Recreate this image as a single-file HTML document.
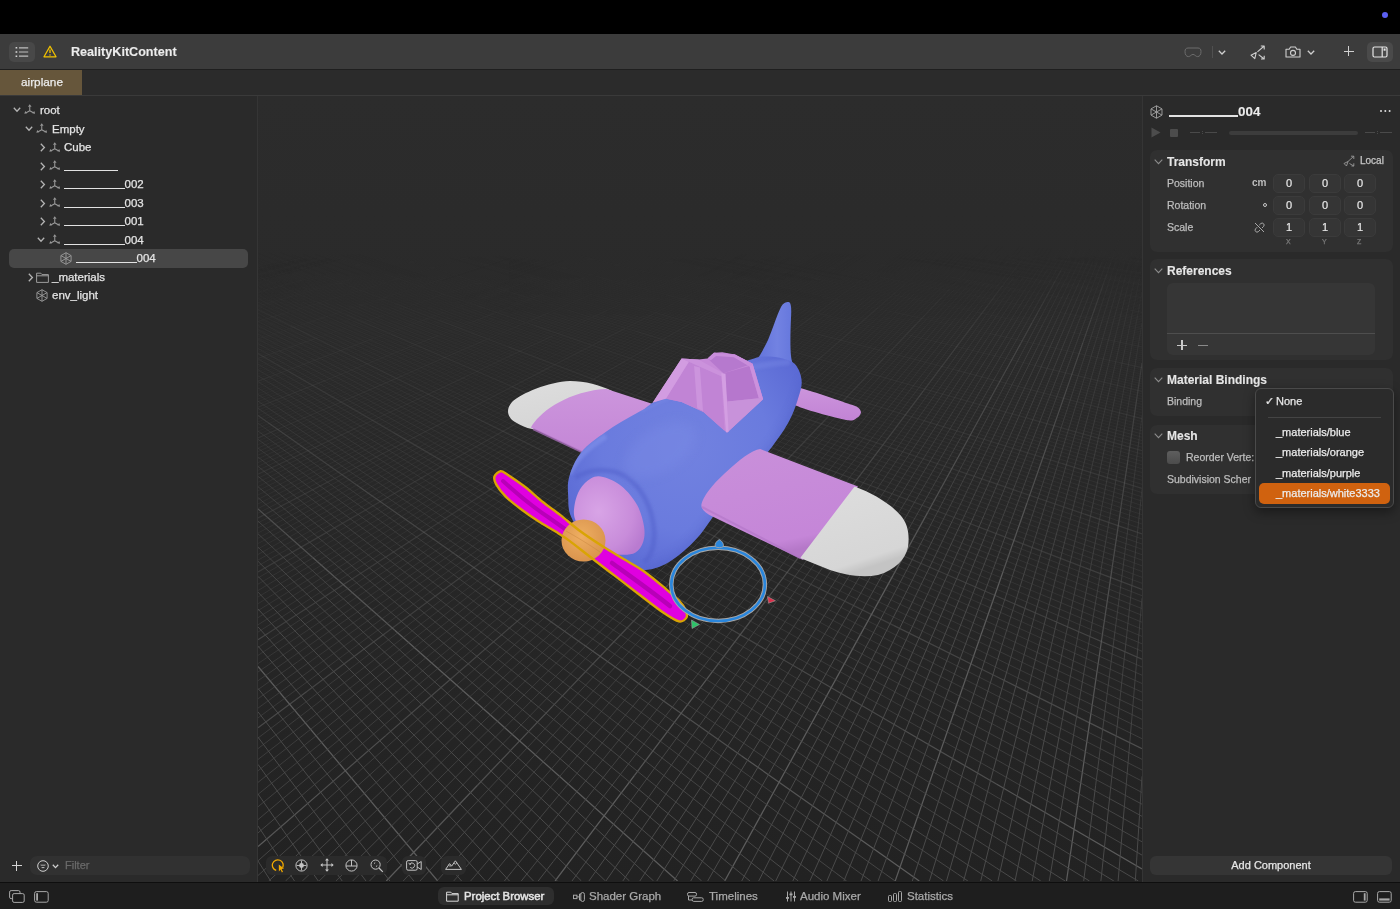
<!DOCTYPE html>
<html><head><meta charset="utf-8">
<style>
*{box-sizing:border-box;margin:0;padding:0}
html,body{width:1400px;height:909px;overflow:hidden;background:#2a2a2a;font-family:"Liberation Sans",sans-serif;color:#dcdcdc}
.a{position:absolute}
.t{position:absolute;white-space:nowrap;line-height:1;-webkit-text-stroke:0.25px currentColor;will-change:transform}
#topbar{left:0;top:0;width:1400px;height:34px;background:#000}
#toolbar{left:0;top:34px;width:1400px;height:36px;background:#3c3c3c;border-bottom:1px solid #1f1f1f}
#tabbar{left:0;top:70px;width:1400px;height:26px;background:#2b2b2b;border-bottom:1px solid #3a3a3a}
#left{left:0;top:96px;width:258px;height:786px;background:#2a2a2a;border-right:1px solid #353535}
#view{left:258px;top:96px;width:884px;height:786px;background:#222;overflow:hidden}
#right{left:1142px;top:96px;width:258px;height:786px;background:#2a2a2a;border-left:1px solid #353535}
#bottom{left:0;top:882px;width:1400px;height:27px;background:#1e1e1e;border-top:1px solid #0e0e0e}
.row{position:absolute;font-size:11.5px;color:#e4e4e4}
.card{position:absolute;left:8px;width:243px;background:#2f2f2f;border-radius:7px}
.fld{position:absolute;width:32px;height:19px;background:#353535;border:1px solid #3b3b3b;border-radius:5px;font-size:11px;color:#e8e8e8;text-align:center;line-height:17px;will-change:transform;-webkit-text-stroke:0.2px currentColor}
.lbl{font-size:11px;color:#bdbdbd}
.hdr{font-size:12px;font-weight:bold;color:#e6e6e6;-webkit-text-stroke:0.1px currentColor}
.us{display:inline-block;border-bottom:1.6px solid #e2e2e2;height:0;vertical-align:baseline;position:relative;top:1.4px}
</style></head><body>
<svg width="0" height="0" style="position:absolute">
<defs>
<symbol id="i-axis" viewBox="0 0 12 11"><g fill="none" stroke="#9a9a9a" stroke-width="1.1"><path d="M6 2.5V7M6 7L2.2 9.2M6 7L9.8 9.2"/></g><g fill="#9a9a9a"><path d="M6 0.3L7.9 3H4.1Z"/><path d="M0.3 10.2L1.3 7.4L3.3 9.8Z"/><path d="M11.7 10.2L10.7 7.4L8.7 9.8Z"/></g></symbol>
<symbol id="i-mesh" viewBox="0 0 12 13"><g fill="none" stroke="#9c9c9c" stroke-width="0.9"><path d="M6 0.7L11.1 3.6V9.4L6 12.3L0.9 9.4V3.6Z"/><path d="M6 0.7V12.3M0.9 3.6L11.1 9.4M11.1 3.6L0.9 9.4"/></g></symbol>
<symbol id="i-folder" viewBox="0 0 13 11"><g fill="none" stroke="#9c9c9c" stroke-width="1"><path d="M0.6 1.2H4.8L6 2.6H12.4V10.4H0.6Z"/><path d="M0.6 3.8H12.4"/></g></symbol>
</defs></svg>
<div id="topbar" class="a"></div>
<div class="a" style="left:1382px;top:12px;width:6px;height:6px;border-radius:3px;background:#5b5ff2"></div>

<div id="toolbar" class="a"></div>
<div class="a" style="left:9px;top:42px;width:26px;height:19.5px;border-radius:5px;background:#484848"></div>
<svg class="a" style="left:15px;top:46px" width="14" height="12"><g fill="#d8d8d8"><rect x="0.5" y="1" width="1.8" height="1.6" rx="0.4"/><rect x="0.5" y="5.2" width="1.8" height="1.6" rx="0.4"/><rect x="0.5" y="9.4" width="1.8" height="1.6" rx="0.4"/></g><g stroke="#bdbdbd" stroke-width="1.2"><path d="M4 1.8H13.2M4 6H13.2M4 10.2H13.2"/></g></svg>
<svg class="a" style="left:43px;top:45px" width="14" height="13"><path d="M7 1.2L13 11.8H1Z" fill="none" stroke="#f2c200" stroke-width="1.3" stroke-linejoin="round"/><path d="M7 4.6V8" stroke="#f2c200" stroke-width="1.3"/><circle cx="7" cy="9.9" r="0.75" fill="#f2c200"/></svg>
<div class="t" style="left:70.5px;top:46px;font-size:12.6px;font-weight:bold;color:#ececec;-webkit-text-stroke:0.1px #ececec">RealityKitContent</div>
<svg class="a" style="left:1184px;top:47px" width="18" height="11"><path d="M4 1H14C16 1 17 2.2 17 4.5C17 7.5 15.8 9.6 13.6 9.6C11.6 9.6 10.8 7.4 9 7.4C7.2 7.4 6.4 9.6 4.4 9.6C2.2 9.6 1 7.5 1 4.5C1 2.2 2 1 4 1Z" fill="none" stroke="#6c6c6c" stroke-width="1"/></svg>
<div class="a" style="left:1212px;top:45.5px;width:1px;height:12px;background:#505050"></div>
<svg class="a" style="left:1218px;top:50px" width="8" height="5"><path d="M0.8 0.8L4 4L7.2 0.8" stroke="#cfcfcf" stroke-width="1.3" fill="none"/></svg>
<svg class="a" style="left:1250px;top:44.5px" width="16" height="15"><g fill="none" stroke="#cfcfcf" stroke-width="1.1" stroke-linejoin="round"><path d="M1 10.2L6.2 7.6L4.8 13.6Z"/><path d="M7.4 6.8L14.2 1M10.8 1H14.2V4.4"/><path d="M8.6 9.6L14.2 14M11 14H14.2V10.8"/></g></svg>
<svg class="a" style="left:1285px;top:45.5px" width="16" height="12"><g fill="none" stroke="#cfcfcf" stroke-width="1.1"><path d="M1 3.2H4.2L5.6 1H10.4L11.8 3.2H15V11H1Z" stroke-linejoin="round"/><circle cx="8" cy="6.9" r="2.5"/></g></svg>
<svg class="a" style="left:1307px;top:50px" width="8" height="5"><path d="M0.8 0.8L4 4L7.2 0.8" stroke="#cfcfcf" stroke-width="1.3" fill="none"/></svg>
<div class="a" style="left:1343.5px;top:50.6px;width:10px;height:1.3px;background:#d0d0d0"></div>
<div class="a" style="left:1347.9px;top:46.2px;width:1.3px;height:10px;background:#d0d0d0"></div>
<div class="a" style="left:1367px;top:42px;width:25.5px;height:19.5px;border-radius:5px;background:#4a4a4a"></div>
<svg class="a" style="left:1372px;top:45.5px" width="16" height="12"><rect x="1" y="1" width="14" height="10" rx="1.5" fill="none" stroke="#e6e6e6" stroke-width="1.2"/><path d="M10.2 1V11" stroke="#e6e6e6" stroke-width="1.2"/><rect x="11.6" y="2.5" width="2" height="2.2" fill="#e6e6e6"/></svg>
<div id="tabbar" class="a"></div>
<div class="a" style="left:0;top:70px;width:82px;height:25px;background:#66563b"></div>
<div class="t" style="left:20.6px;top:77px;font-size:11.8px;color:#ececec">airplane</div>

<div id="left" class="a"></div>
<div class="a" style="left:9px;top:249px;width:239px;height:18.5px;border-radius:5px;background:#474747"></div>
<svg class="a" style="left:13px;top:106.5px" width="8" height="6"><path d="M0.8 0.8L4 4.2L7.2 0.8" stroke="#b4b4b4" stroke-width="1.3" fill="none"/></svg>
<svg class="a" style="left:23.5px;top:104px" width="11.5" height="10.5" viewBox="0 0 12 11"><use href="#i-axis"/></svg>
<div class="t row" style="left:40px;top:104.5px">root</div>
<svg class="a" style="left:25px;top:125.5px" width="8" height="6"><path d="M0.8 0.8L4 4.2L7.2 0.8" stroke="#b4b4b4" stroke-width="1.3" fill="none"/></svg>
<svg class="a" style="left:35.5px;top:123px" width="11.5" height="10.5" viewBox="0 0 12 11"><use href="#i-axis"/></svg>
<div class="t row" style="left:52px;top:123.5px">Empty</div>
<svg class="a" style="left:40px;top:143.0px" width="6" height="9"><path d="M0.8 0.8L4.4 4.5L0.8 8.2" stroke="#b4b4b4" stroke-width="1.3" fill="none"/></svg>
<svg class="a" style="left:48.5px;top:141.5px" width="11.5" height="10.5" viewBox="0 0 12 11"><use href="#i-axis"/></svg>
<div class="t row" style="left:64px;top:142.0px">Cube</div>
<svg class="a" style="left:40px;top:161.5px" width="6" height="9"><path d="M0.8 0.8L4.4 4.5L0.8 8.2" stroke="#b4b4b4" stroke-width="1.3" fill="none"/></svg>
<svg class="a" style="left:48.5px;top:160px" width="11.5" height="10.5" viewBox="0 0 12 11"><use href="#i-axis"/></svg>
<div class="t row" style="left:64px;top:160.5px"><span class="us" style="width:54px"></span></div>
<svg class="a" style="left:40px;top:180.0px" width="6" height="9"><path d="M0.8 0.8L4.4 4.5L0.8 8.2" stroke="#b4b4b4" stroke-width="1.3" fill="none"/></svg>
<svg class="a" style="left:48.5px;top:178.5px" width="11.5" height="10.5" viewBox="0 0 12 11"><use href="#i-axis"/></svg>
<div class="t row" style="left:64px;top:179.0px"><span class="us" style="width:60.5px"></span>002</div>
<svg class="a" style="left:40px;top:198.5px" width="6" height="9"><path d="M0.8 0.8L4.4 4.5L0.8 8.2" stroke="#b4b4b4" stroke-width="1.3" fill="none"/></svg>
<svg class="a" style="left:48.5px;top:197px" width="11.5" height="10.5" viewBox="0 0 12 11"><use href="#i-axis"/></svg>
<div class="t row" style="left:64px;top:197.5px"><span class="us" style="width:60.5px"></span>003</div>
<svg class="a" style="left:40px;top:217.0px" width="6" height="9"><path d="M0.8 0.8L4.4 4.5L0.8 8.2" stroke="#b4b4b4" stroke-width="1.3" fill="none"/></svg>
<svg class="a" style="left:48.5px;top:215.5px" width="11.5" height="10.5" viewBox="0 0 12 11"><use href="#i-axis"/></svg>
<div class="t row" style="left:64px;top:216.0px"><span class="us" style="width:60.5px"></span>001</div>
<svg class="a" style="left:37px;top:236.5px" width="8" height="6"><path d="M0.8 0.8L4 4.2L7.2 0.8" stroke="#b4b4b4" stroke-width="1.3" fill="none"/></svg>
<svg class="a" style="left:48.5px;top:234px" width="11.5" height="10.5" viewBox="0 0 12 11"><use href="#i-axis"/></svg>
<div class="t row" style="left:64px;top:234.5px"><span class="us" style="width:60.5px"></span>004</div>
<svg class="a" style="left:60px;top:252.0px" width="12" height="13"><use href="#i-mesh"/></svg>
<div class="t row" style="left:76px;top:253.0px"><span class="us" style="width:60.5px"></span>004</div>
<svg class="a" style="left:28px;top:272.5px" width="6" height="9"><path d="M0.8 0.8L4.4 4.5L0.8 8.2" stroke="#b4b4b4" stroke-width="1.3" fill="none"/></svg>
<svg class="a" style="left:36px;top:271.5px" width="13" height="11"><use href="#i-folder"/></svg>
<div class="t row" style="left:52px;top:271.5px">_materials</div>
<svg class="a" style="left:36px;top:289.0px" width="12" height="13"><use href="#i-mesh"/></svg>
<div class="t row" style="left:52px;top:290.0px">env_light</div>
<div id="view" class="a">
<svg width="884" height="785" style="position:absolute;left:0;top:0">
<defs>
<linearGradient id="bgg" x1="0" y1="0" x2="0" y2="1"><stop offset="0" stop-color="#2c2c2c"/><stop offset="0.3" stop-color="#2a2a2a"/><stop offset="1" stop-color="#222222"/></linearGradient>
<linearGradient id="fade" x1="0" y1="0" x2="0" y2="785" gradientUnits="userSpaceOnUse"><stop offset="0.177" stop-color="#fff" stop-opacity="0"/><stop offset="0.285" stop-color="#fff" stop-opacity="0.26"/><stop offset="0.451" stop-color="#fff" stop-opacity="0.48"/><stop offset="0.642" stop-color="#fff" stop-opacity="0.7"/><stop offset="0.833" stop-color="#fff" stop-opacity="0.9"/><stop offset="1.0" stop-color="#fff" stop-opacity="1"/></linearGradient>
<mask id="fm"><rect width="884" height="785" fill="url(#fade)"/></mask>
<linearGradient id="fade2" x1="0" y1="0" x2="0" y2="785" gradientUnits="userSpaceOnUse"><stop offset="0.183" stop-color="#fff" stop-opacity="0"/><stop offset="0.324" stop-color="#fff" stop-opacity="0.16"/><stop offset="0.451" stop-color="#fff" stop-opacity="0.34"/><stop offset="0.642" stop-color="#fff" stop-opacity="0.66"/><stop offset="0.833" stop-color="#fff" stop-opacity="0.9"/><stop offset="1.0" stop-color="#fff" stop-opacity="1"/></linearGradient>
<mask id="fm2"><rect width="884" height="785" fill="url(#fade2)"/></mask>
</defs>
<rect width="884" height="785" fill="url(#bgg)"/>
<g fill="none"><path stroke="#5c5c5c" stroke-width="1.25" stroke-opacity="0.02" d="M856.9 154.9L860.9 143.5M814.7 153.1L820.5 142.5M766.3 160.8L773.5 151.2M716.6 166.8L733.2 149.4M666.1 171.7L684.4 155.8M615.3 175.5L644.6 153.7M565.6 177.7L595.9 158.1M514.8 180.3L556.8 156.1M475.2 176.6L507.6 159.9M426.2 178.2L469.9 157.6M376.8 179.7L421.1 160.6M326.9 181.3L372.0 163.4M276.3 183.0L333.8 161.8M229.1 183.4L286.4 163.6M188.6 181.7L247.6 162.6M141.2 182.3L211.8 160.7M93.9 182.9L164.4 162.5M46.9 183.4L128.9 160.9M0.0 183.9L81.9 162.5M0.0 172.7L46.8 161.1M56.7 176.7L11.3 159.4M126.3 177.9L68.9 158.3M194.6 178.4L137.2 160.5M271.8 181.1L202.5 161.5M338.0 180.4L256.7 159.2M416.6 182.7L323.1 160.2M484.1 182.0L390.1 161.0M552.4 181.5L457.7 161.7M621.5 181.1L526.0 162.4M691.4 180.8L583.0 160.9M762.4 180.7L652.9 161.6M836.4 180.9L717.5 161.4M884.0 176.9L776.1 160.1M884.0 166.2L847.6 160.8"/>
<path stroke="#5c5c5c" stroke-width="1.25" stroke-opacity="0.04" d="M852.9 166.4L856.9 154.9M808.9 163.6L814.7 153.1M759.1 170.4L766.3 160.8M708.3 175.5L716.6 166.8M647.9 187.5L666.1 171.7M595.8 189.9L615.3 175.5M545.4 190.8L565.6 177.7M493.8 192.3L514.8 180.3M432.0 198.9L475.2 176.6M382.5 198.7L426.2 178.2M332.5 198.8L376.8 179.7M281.8 199.2L326.9 181.3M230.2 200.0L276.3 183.0M183.3 199.2L229.1 183.4M129.7 200.7L188.6 181.7M82.4 200.3L141.2 182.3M35.2 199.8L93.9 182.9M0.0 196.2L46.9 183.4M22.1 190.1L0.0 180.6M90.7 189.7L56.7 176.7M172.2 193.7L126.3 177.9M252.1 196.2L194.6 178.4M329.5 197.5L271.8 181.1M407.7 198.6L338.0 180.4M486.7 199.6L416.6 182.7M566.5 200.5L484.1 182.0M635.3 198.9L552.4 181.5M716.9 199.8L621.5 181.1M787.7 198.6L691.4 180.8M859.7 197.6L762.4 180.7M884.0 188.8L836.4 180.9"/>
<path stroke="#5c5c5c" stroke-width="1.25" stroke-opacity="0.07" d="M803.1 174.1L808.9 163.6M751.8 180.0L759.1 170.4M691.7 192.9L708.3 175.5M638.7 195.4L647.9 187.5M576.2 204.4L595.8 189.9M515.1 210.4L545.4 190.8M462.3 210.4L493.8 192.3M399.6 215.7L432.0 198.9M349.7 214.1L382.5 198.7M288.2 217.9L332.5 198.8M236.7 217.1L281.8 199.2M172.7 221.3L230.2 200.0M126.0 219.0L183.3 199.2M70.7 219.8L129.7 200.7M23.5 218.2L82.4 200.3M0.0 210.0L35.2 199.8M55.2 204.5L22.1 190.1M136.0 207.1L90.7 189.7M218.1 209.4L172.2 193.7M309.5 214.0L252.1 196.2M398.8 217.1L329.5 197.5M477.4 216.7L407.7 198.6M556.8 216.5L486.7 199.6M637.0 216.3L566.5 200.5M718.2 216.2L635.3 198.9M800.5 216.2L716.9 199.8M872.0 214.1L787.7 198.6M884.0 201.8L859.7 197.6"/>
<path stroke="#5c5c5c" stroke-width="1.25" stroke-opacity="0.1" d="M848.9 177.8L852.9 166.4M744.6 189.6L751.8 180.0M683.5 201.7L691.7 192.9M620.5 211.3L638.7 195.4M556.7 218.9L576.2 204.4M494.9 223.5L515.1 210.4M430.8 228.5L462.3 210.4M367.2 232.4L399.6 215.7M295.0 239.7L349.7 214.1M232.7 241.7L288.2 217.9M180.4 239.5L236.7 217.1M115.1 242.6L172.7 221.3M57.3 242.7L126.0 219.0M0.0 242.8L70.7 219.8M0.0 225.4L23.5 218.2M88.4 218.8L55.2 204.5M181.3 224.4L136.0 207.1M275.5 229.1L218.1 209.4M378.4 235.4L309.5 214.0M468.1 236.8L398.8 217.1M558.7 237.9L477.4 216.7M650.3 239.0L556.8 216.5M731.1 237.3L637.0 216.3M812.9 236.0L718.2 216.2M884.0 232.6L800.5 216.2M884.0 216.3L872.0 214.1"/>
<path stroke="#5c5c5c" stroke-width="1.25" stroke-opacity="0.14" d="M844.9 189.3L848.9 177.8M797.3 184.7L803.1 174.1M737.4 199.2L744.6 189.6M666.9 219.1L683.5 201.7M602.2 227.2L620.5 211.3M527.4 240.6L556.7 218.9M454.5 249.6L494.9 223.5M367.7 264.7L430.8 228.5M291.6 271.4L367.2 232.4M207.6 280.7L295.0 239.7M144.1 279.9L232.7 241.7M67.6 284.4L180.4 239.5M11.5 280.8L115.1 242.6M0.0 262.5L57.3 242.7M32.3 229.6L0.0 213.5M132.6 238.0L88.4 218.8M249.3 250.5L181.3 224.4M378.9 264.6L275.5 229.1M504.8 274.7L378.4 235.4M606.8 276.0L468.1 236.8M698.1 274.2L558.7 237.9M778.8 269.9L650.3 239.0M860.5 266.3L731.1 237.3M884.0 250.8L812.9 236.0"/>
<path stroke="#5c5c5c" stroke-width="1.25" stroke-opacity="0.18" d="M791.5 195.2L797.3 184.7M730.2 208.8L737.4 199.2M658.6 227.8L666.9 219.1M565.7 258.9L602.2 227.2M468.8 284.1L527.4 240.6M363.6 308.4L454.5 249.6M273.2 319.0L367.7 264.7M183.6 327.2L291.6 271.4M98.3 332.0L207.6 280.7M22.2 332.3L144.1 279.9M0.0 311.2L67.6 284.4M0.0 285.1L11.5 280.8M97.0 261.7L32.3 229.6M254.1 290.6L132.6 238.0M408.0 311.2L249.3 250.5M551.1 323.6L378.9 264.6M665.7 324.6L504.8 274.7M768.5 321.9L606.8 276.0M860.8 316.6L698.1 274.2M884.0 295.3L778.8 269.9M884.0 271.6L860.5 266.3"/>
<path stroke="#5c5c5c" stroke-width="1.25" stroke-opacity="0.24" d="M840.9 200.7L844.9 189.3M785.7 205.7L791.5 195.2M715.7 228.0L730.2 208.8M625.5 262.6L658.6 227.8M501.9 314.4L565.7 258.9M380.9 349.3L468.8 284.1M272.7 367.3L363.6 308.4M168.1 379.3L273.2 319.0M75.6 383.0L183.6 327.2M0.0 378.2L98.3 332.0M0.0 341.9L22.2 332.3M31.2 275.8L-0.0 257.6M215.6 320.7L97.0 261.7M408.9 357.5L254.1 290.6M566.7 372.0L408.0 311.2M700.3 374.8L551.1 323.6M803.6 367.4L665.7 324.6M884.0 354.6L768.5 321.9M884.0 322.6L860.8 316.6"/>
<path stroke="#5c5c5c" stroke-width="1.25" stroke-opacity="0.3" d="M836.9 212.2L840.9 200.7M779.9 216.3L785.7 205.7M701.3 247.2L715.7 228.0M567.5 323.5L625.5 262.6M428.9 377.9L501.9 314.4M293.0 414.5L380.9 349.3M171.7 432.6L272.7 367.3M73.5 433.6L168.1 379.3M0.0 422.0L75.6 383.0M135.2 336.4L31.2 275.8M366.5 395.7L215.6 320.7M563.5 424.4L408.9 357.5M702.7 424.0L566.7 372.0M826.6 418.1L700.3 374.8M884.0 392.4L803.6 367.4"/>
<path stroke="#5c5c5c" stroke-width="1.25" stroke-opacity="0.38" d="M878.7 303.1L884.0 267.0M832.9 223.6L836.9 212.2M774.1 226.8L779.9 216.3M665.2 295.2L701.3 247.2M509.5 384.5L567.5 323.5M346.7 449.2L428.9 377.9M205.1 479.6L293.0 414.5M90.9 484.9L171.7 432.6M0.0 475.9L73.5 433.6M9.9 326.5L0.0 319.5M260.0 409.1L135.2 336.4M517.5 470.7L366.5 395.7M696.1 481.8L563.5 424.4M827.3 471.8L702.7 424.0M884.0 437.8L826.6 418.1"/>
<path stroke="#5c5c5c" stroke-width="1.25" stroke-opacity="0.46" d="M870.0 363.3L878.7 303.1M824.9 246.6L832.9 223.6M762.5 247.9L774.1 226.8M621.9 352.9L665.2 295.2M443.2 454.1L509.5 384.5M264.6 520.6L346.7 449.2M127.0 537.6L205.1 479.6M10.1 537.2L90.9 484.9M98.7 389.0L9.9 326.5M405.6 494.0L260.0 409.1M636.0 529.6L517.5 470.7M795.6 524.8L696.1 481.8M884.0 493.4L827.3 471.8"/>
<path stroke="#5c5c5c" stroke-width="1.25" stroke-opacity="0.55" d="M862.9 411.5L870.0 363.3M809.0 292.4L824.9 246.6M733.5 300.5L762.5 247.9M571.4 420.1L621.9 352.9M368.6 532.5L443.2 454.1M191.6 584.0L264.6 520.6M48.8 595.5L127.0 537.6M0.0 543.7L10.1 537.2M197.4 458.5L98.7 389.0M540.8 572.8L405.6 494.0M743.9 583.2L636.0 529.6M884.0 563.1L795.6 524.8"/>
<path stroke="#5c5c5c" stroke-width="1.25" stroke-opacity="0.65" d="M854.1 471.8L862.9 411.5M789.0 349.7L809.0 292.4M704.5 353.2L733.5 300.5M520.9 487.3L571.4 420.1M294.0 610.9L368.6 532.5M127.7 639.6L191.6 584.0M0.0 631.7L48.8 595.5M325.7 548.8L197.4 458.5M644.8 633.5L540.8 572.8M830.1 626.1L743.9 583.2"/>
<path stroke="#5c5c5c" stroke-width="1.25" stroke-opacity="0.75" d="M843.6 544.0L854.1 471.8M769.0 406.9L789.0 349.7M669.7 416.4L704.5 353.2M455.9 573.7L520.9 487.3M219.5 689.2L294.0 610.9M63.9 695.1L127.7 639.6M54.7 461.5L0.0 413.0M483.7 659.9L325.7 548.8M738.4 688.0L644.8 633.5M884.0 652.8L830.1 626.1"/>
<path stroke="#5c5c5c" stroke-width="1.25" stroke-opacity="0.87" d="M833.1 616.3L843.6 544.0M745.0 475.7L769.0 406.9M634.9 479.6L669.7 416.4M376.5 679.4L455.9 573.7M161.5 750.2L219.5 689.2M9.1 742.7L63.9 695.1M136.8 534.3L54.7 461.5M602.1 743.3L483.7 659.9M811.2 730.5L738.4 688.0"/>
<path stroke="#5c5c5c" stroke-width="1.25" stroke-opacity="1.0" d="M808.5 785.0L833.1 616.3M637.2 785.0L745.0 475.7M466.7 785.0L634.9 479.6M297.1 785.0L376.5 679.4M128.3 785.0L161.5 750.2M0.0 750.6L9.1 742.7M179.7 785.0L0.0 570.5M419.6 785.0L136.8 534.3M661.3 785.0L602.1 743.3M884.0 772.9L811.2 730.5"/>
<path stroke="#4a4a4a" stroke-width="1" stroke-opacity="0.02" d="M881.3 162.0L884.0 150.2M878.1 156.8L881.1 144.9M874.1 155.3L877.3 143.7M869.8 155.3L873.1 143.7M865.4 155.3L869.0 143.7M861.2 154.9L865.0 143.5M852.7 154.5L856.9 143.3M848.4 154.5L852.8 143.3M844.1 154.5L848.7 143.3M839.9 154.1L844.7 143.1M835.6 154.1L840.6 143.1M831.5 153.8L836.6 142.9M827.2 153.8L832.5 142.9M823.1 153.4L828.6 142.7M818.8 153.4L824.5 142.7M810.4 153.1L816.5 142.5M806.4 152.7L812.5 142.4M802.1 152.7L808.4 142.4M791.6 162.6L804.5 142.2M787.2 162.6L793.8 152.4M783.0 162.1L789.8 152.1M778.9 161.7L785.7 151.8M774.5 161.7L781.5 151.8M770.4 161.2L777.5 151.5M761.9 160.8L769.3 151.2M757.8 160.4L765.3 150.9M753.7 160.0L761.3 150.7M741.6 169.3L757.1 150.7M737.5 168.8L753.1 150.4M733.4 168.3L749.2 150.1M728.8 168.3L745.0 150.1M724.7 167.8L741.0 149.9M720.7 167.3L737.1 149.6M712.1 166.8L729.0 149.4M708.0 166.4L725.1 149.2M704.0 165.9L712.6 157.4M691.3 173.9L708.6 157.1M686.7 173.9L704.3 157.1M682.6 173.3L700.3 156.8M678.6 172.8L696.4 156.5M674.4 172.5L692.3 156.3M670.2 172.1L688.4 156.0M662.0 171.3L680.4 155.6M657.8 170.9L676.4 155.4M653.7 170.6L672.4 155.2M649.5 170.3L668.3 155.0M635.9 177.6L664.3 154.8M632.4 176.6L660.7 154.3M628.1 176.3L656.7 154.1M623.9 176.0L652.7 154.0M619.6 175.7L648.6 153.9M611.9 174.6L631.3 160.4M607.6 174.4L627.2 160.2M603.3 174.2L623.1 160.1M599.8 173.3L619.5 159.6M585.6 180.0L615.4 159.4M581.2 179.8L611.2 159.3M577.8 178.9L607.7 158.8M573.4 178.8L603.6 158.7M568.9 178.6L599.4 158.6M561.1 177.6L591.7 158.1M556.6 177.5L587.6 158.0M553.3 176.7L584.1 157.5M548.8 176.6L579.9 157.5M545.5 175.8L576.4 157.0M530.6 182.0L572.2 157.0M527.3 181.2L568.7 156.6M522.7 181.1L564.5 156.6M519.5 180.3L550.6 162.2M511.6 179.4L542.9 161.6M506.9 179.4L538.6 161.7M503.7 178.6L535.2 161.1M499.0 178.7L530.8 161.2M495.8 177.9L527.5 160.7M491.1 178.0L523.1 160.7M477.3 182.8L519.7 160.2M472.4 182.9L515.4 160.3M469.3 182.1L512.0 159.8M461.3 181.4L504.2 159.4M456.4 181.5L499.8 159.5M453.3 180.7L496.5 159.1M448.3 180.9L492.1 159.1M445.3 180.1L488.7 158.7M440.3 180.3L484.3 158.8M426.3 184.7L470.0 163.6M423.4 183.9L466.8 163.1M418.2 184.1L462.2 163.3M410.0 183.5L454.3 162.9M407.1 182.7L451.1 162.4M404.2 181.9L447.9 161.9M398.9 182.2L443.3 162.1M396.0 181.4L440.1 161.6M390.7 181.7L435.4 161.8M387.9 180.9L432.2 161.3M374.0 185.0L429.0 160.9M368.5 185.3L424.3 161.1M360.2 184.8L416.4 160.8M357.4 184.0L413.3 160.4M354.7 183.2L410.1 159.9M349.1 183.6L405.4 160.1M346.4 182.8L391.1 164.3M340.7 183.2L397.5 159.9M338.0 182.4L383.1 164.1M324.1 186.1L380.0 163.6M329.6 182.1L375.0 163.9M313.1 184.9L369.0 162.9M307.1 185.4L364.0 163.2M304.6 184.6L361.0 162.7M298.5 185.1L355.9 163.0M296.0 184.3L353.0 162.5M293.5 183.5L350.0 162.0M287.4 184.1L344.9 162.4M284.9 183.2L341.9 161.9M271.2 186.6L339.0 161.4M262.4 186.4L330.9 161.3M260.1 185.6L328.0 160.8M253.6 186.2L322.8 161.2M251.3 185.4L308.5 164.8M249.0 184.5L305.7 164.3M242.5 185.2L300.2 164.7M240.2 184.4L297.4 164.2M238.0 183.5L294.7 163.7M231.3 184.2L289.2 164.1M222.3 184.2L280.8 164.1M220.2 183.3L278.1 163.6M206.5 186.4L275.4 163.1M211.1 183.3L269.7 163.6M197.4 186.3L267.1 163.0M195.4 185.4L264.4 162.5M188.1 186.3L258.7 163.0M186.2 185.4L256.0 162.5M184.3 184.6L253.4 162.0M175.0 184.6L245.0 162.0M173.1 183.7L242.4 161.5M165.5 184.7L236.5 162.1M163.7 183.8L233.9 161.6M150.4 186.5L219.8 164.7M154.2 183.9L225.4 161.7M140.7 186.7L211.1 164.8M139.1 185.7L208.7 164.2M130.9 186.8L202.4 164.9M127.9 184.9L197.7 163.8M126.4 184.0L195.3 163.2M118.1 185.2L188.9 163.9M116.6 184.2L186.6 163.3M103.7 186.7L184.3 162.8M106.6 184.5L177.7 163.5M93.6 187.0L175.5 162.9M92.4 186.0L173.3 162.4M95.2 183.8L166.6 163.1M81.1 185.3L162.2 162.0M71.7 186.6L155.4 162.7M70.7 185.6L153.3 162.2M69.8 184.6L139.5 164.9M60.1 186.0L144.1 162.4M59.2 185.0L130.3 165.1M58.4 184.0L128.4 164.5M48.3 185.5L132.8 162.1M47.6 184.4L119.0 164.8M36.5 185.0L109.4 165.1M35.9 183.9L107.7 164.5M23.6 186.0L106.0 163.8M23.2 184.9L104.3 163.1M12.0 186.7L96.3 164.2M11.8 185.5L94.7 163.5M11.6 184.4L93.1 162.8M0.0 186.2L84.8 163.9M0.0 185.1L83.4 163.2M0.0 182.7L73.3 163.7M0.0 181.6L72.0 163.0M0.0 180.4L70.6 162.3M0.0 179.3L61.6 163.5M0.0 178.2L60.4 162.8M0.0 177.0L59.3 162.0M0.0 175.9L49.8 163.4M0.0 174.9L48.8 162.6M0.0 173.8L35.8 164.8M0.0 171.7L37.0 162.5M0.0 170.6L24.1 164.7M0.0 169.6L23.6 163.8M0.0 168.5L24.9 162.5M0.0 167.5L12.2 164.6M0.0 166.5L11.9 163.6M0.0 165.5L12.6 162.5M11.2 176.9L0.0 172.3M11.2 174.2L0.0 169.6M22.4 176.1L0.0 167.0M33.6 178.0L0.0 164.5M33.6 175.4L-0.0 162.1M44.8 177.2L0.0 159.7M56.7 179.3L0.0 157.3M68.0 178.5L11.3 157.1M79.3 180.3L22.7 159.1M79.3 177.8L22.7 156.8M90.7 179.5L34.0 158.8M90.7 177.1L45.3 160.7M102.0 178.8L45.3 158.5M113.3 180.4L56.7 160.4M113.3 178.1L56.7 158.2M126.3 180.3L68.9 160.4M137.8 179.6L80.4 160.1M140.2 178.1L83.0 158.9M158.0 181.8L88.8 158.8M162.4 181.0L93.6 158.4M168.7 180.9L99.5 158.3M173.1 180.1L115.8 161.6M179.5 180.0L121.7 161.5M183.8 179.2L126.4 161.1M201.8 182.7L132.4 161.0M212.6 181.8L143.1 160.5M216.9 181.1L147.9 160.0M223.4 181.0L153.9 160.0M227.7 180.2L158.6 159.5M234.3 180.1L164.6 159.5M250.0 182.8L180.9 162.5M256.7 182.7L187.0 162.4M260.9 181.9L191.7 162.0M267.6 181.9L197.8 161.9M278.5 181.1L208.6 161.4M294.2 183.5L213.3 161.0M301.1 183.5L219.5 161.0M305.2 182.7L224.1 160.5M312.0 182.7L230.3 160.5M316.1 181.9L235.0 160.1M323.0 181.9L241.2 160.1M338.7 184.2L257.4 162.7M345.7 184.2L263.8 162.7M356.7 183.5L274.7 162.3M360.7 182.7L279.3 161.8M367.8 182.7L285.7 161.8M383.3 184.9L290.2 161.4M390.6 184.9L296.6 161.4M394.4 184.1L301.1 161.0M401.7 184.2L307.6 161.0M405.5 183.4L323.8 163.4M412.8 183.5L330.4 163.5M424.0 182.8L341.4 163.0M439.4 184.8L345.8 162.5M447.0 184.9L352.5 162.6M450.6 184.0L356.8 162.1M458.2 184.2L363.5 162.2M461.7 183.4L367.9 161.7M469.4 183.5L374.6 161.8M484.7 185.4L379.0 161.3M480.6 182.8L385.7 161.4M503.8 184.8L408.7 163.7M507.2 184.0L413.0 163.2M515.1 184.2L419.9 163.3M518.4 183.4L424.1 162.8M526.5 183.6L431.1 162.9M541.6 185.3L435.3 162.4M549.8 185.5L442.3 162.6M552.9 184.6L446.5 162.1M561.2 184.9L453.5 162.2M572.6 184.2L464.8 161.9M575.6 183.4L480.8 163.8M584.1 183.6L476.1 161.5M598.9 185.2L492.0 163.4M595.6 183.1L499.4 163.6M610.4 184.6L503.3 163.1M613.2 183.7L507.3 162.6M621.9 184.0L514.7 162.7M624.7 183.2L518.6 162.2M647.9 184.9L529.9 161.9M644.9 182.9L537.4 162.1M659.4 184.3L553.0 163.8M668.5 184.7L548.7 161.8M670.9 183.7L564.4 163.5M680.1 184.1L572.1 163.7M682.5 183.2L575.8 163.2M691.7 183.6L583.6 163.4M705.9 184.9L587.2 162.8M717.5 184.3L598.6 162.5M727.2 184.7L606.6 162.8M729.2 183.8L610.1 162.2M739.0 184.2L618.1 162.5M740.9 183.3L621.6 161.9M750.8 183.7L629.7 162.2M752.6 182.8L633.1 161.6M762.7 183.2L641.3 161.9M776.3 184.4L656.6 163.4M788.1 183.9L668.2 163.1M786.5 182.3L676.8 163.5M799.9 183.4L679.8 162.8M801.1 182.3L682.8 162.2M811.8 182.9L691.4 162.5M824.7 183.9L694.3 161.9M823.7 182.4L703.1 162.3M836.5 183.4L705.9 161.6M835.7 182.0L714.8 162.0M847.7 181.6L726.6 161.7M860.2 182.4L741.1 163.0M871.9 183.1L738.3 161.5M872.1 182.0L752.8 162.8M884.0 182.7L750.2 161.3M884.0 181.5L764.5 162.5M884.0 180.4L774.2 163.0M884.0 179.2L776.3 162.2M884.0 178.1L786.2 162.7M884.0 175.8L798.1 162.5M884.0 174.7L799.9 161.7M884.0 173.6L810.2 162.3M884.0 172.5L811.8 161.5M884.0 171.5L822.3 162.1M884.0 170.4L823.7 161.2M884.0 169.3L834.5 161.9M884.0 168.3L835.6 161.0M884.0 167.2L846.7 161.7M884.0 165.2L859.0 161.5M884.0 164.2L871.8 162.4M884.0 163.2L871.5 161.3"/>
<path stroke="#4a4a4a" stroke-width="1" stroke-opacity="0.04" d="M878.7 173.7L881.3 162.0M875.2 168.6L878.1 156.8M871.0 167.0L874.1 155.3M866.4 167.0L869.8 155.3M861.9 167.0L865.4 155.3M857.5 166.4L861.2 154.9M848.6 165.8L852.7 154.5M844.0 165.8L848.4 154.5M839.5 165.8L844.1 154.5M835.2 165.2L839.9 154.1M830.6 165.2L835.6 154.1M826.4 164.6L831.5 153.8M821.9 164.6L827.2 153.8M817.6 164.1L823.1 153.4M813.1 164.1L818.8 153.4M804.4 163.6L810.4 153.1M800.2 163.1L806.4 152.7M795.8 163.1L802.1 152.7M780.5 172.8L787.2 162.6M776.3 172.2L783.0 162.1M772.1 171.6L778.9 161.7M767.4 171.6L774.5 161.7M763.2 171.0L770.4 161.2M754.5 170.4L761.9 160.8M742.8 179.3L757.8 160.4M738.6 178.6L753.7 160.0M733.8 178.6L741.6 169.3M729.6 178.0L737.5 168.8M725.5 177.3L733.4 168.3M720.7 177.3L728.8 168.3M716.6 176.7L724.7 167.8M712.4 176.1L720.7 167.3M695.2 184.2L712.1 166.8M691.0 183.6L708.0 166.4M686.9 182.9L704.0 165.9M682.7 182.2L691.3 173.9M677.9 182.2L686.7 173.9M673.8 181.6L682.6 173.3M669.7 181.0L678.6 172.8M656.4 188.7L674.4 172.5M652.1 188.1L670.2 172.1M643.6 187.0L662.0 171.3M639.3 186.5L657.8 170.9M635.0 186.0L653.7 170.6M630.7 185.6L649.5 170.3M616.9 192.8L635.9 177.6M613.5 191.5L632.4 176.6M609.1 191.1L628.1 176.3M604.7 190.7L623.9 176.0M600.2 190.3L619.6 175.7M592.4 188.8L611.9 174.6M588.0 188.5L607.6 174.4M573.6 195.2L603.3 174.2M570.3 194.0L599.8 173.3M565.8 193.7L585.6 180.0M561.1 193.5L581.2 179.8M557.9 192.3L577.8 178.9M553.3 192.1L573.4 178.8M548.6 191.9L568.9 178.6M530.5 197.2L561.1 177.6M525.7 197.0L556.6 177.5M522.6 195.9L553.3 176.7M517.7 195.8L548.8 176.6M514.6 194.6L545.5 175.8M509.8 194.6L530.6 182.0M496.3 199.6L527.3 181.2M491.3 199.5L522.7 181.1M488.3 198.4L519.5 180.3M480.3 197.2L511.6 179.4M475.2 197.2L506.9 179.4M472.2 196.1L503.7 178.6M467.1 196.2L499.0 178.7M453.6 200.8L495.8 177.9M448.4 200.9L491.1 178.0M445.5 199.8L477.3 182.8M440.2 199.9L472.4 182.9M437.3 198.8L469.3 182.1M429.1 197.8L461.3 181.4M423.8 198.0L456.4 181.5M410.1 202.3L453.3 180.7M404.6 202.6L448.3 180.9M401.9 201.4L445.3 180.1M396.2 201.7L440.3 180.3M393.5 200.6L426.3 184.7M390.8 199.5L423.4 183.9M385.2 199.8L418.2 184.1M376.8 199.0L410.0 183.5M363.1 203.0L407.1 182.7M360.5 201.9L404.2 181.9M354.6 202.3L398.9 182.2M352.0 201.2L396.0 181.4M346.1 201.6L390.7 181.7M343.5 200.5L387.9 180.9M330.0 204.2L374.0 185.0M323.8 204.7L368.5 185.3M315.1 204.1L360.2 184.8M312.7 202.9L357.4 184.0M310.4 201.8L354.7 183.2M304.0 202.4L349.1 183.6M301.7 201.3L346.4 182.8M295.3 201.8L340.7 183.2M281.7 205.3L338.0 182.4M279.4 204.2L324.1 186.1M272.8 204.8L329.6 182.1M268.4 202.6L313.1 184.9M261.6 203.3L307.1 185.4M259.5 202.1L304.6 184.6M252.6 202.9L298.5 185.1M250.5 201.8L296.0 184.3M237.1 205.0L293.5 183.5M229.9 205.8L287.4 184.1M227.9 204.6L284.9 183.2M226.0 203.5L271.2 186.6M216.8 203.2L262.4 186.4M203.6 206.2L260.1 185.6M207.5 202.9L253.6 186.2M194.2 205.9L251.3 185.4M192.4 204.7L249.0 184.5M184.7 205.7L242.5 185.2M183.0 204.5L240.2 184.4M181.3 203.3L238.0 183.5M173.5 204.3L231.3 184.2M163.8 204.2L222.3 184.2M162.2 203.1L220.2 183.3M149.2 205.8L206.5 186.4M152.5 203.0L211.1 183.3M139.3 205.7L197.4 186.3M137.9 204.5L195.4 185.4M129.3 205.7L188.1 186.3M128.0 204.5L186.2 185.4M126.7 203.3L184.3 184.6M116.6 203.4L175.0 184.6M103.9 205.9L173.1 183.7M106.4 203.5L165.5 184.7M93.6 206.0L163.7 183.8M92.5 204.7L150.4 186.5M83.0 206.1L154.2 183.9M82.1 204.9L140.7 186.7M81.2 203.6L139.1 185.7M71.4 205.1L130.9 186.8M58.1 206.1L127.9 184.9M57.4 204.8L126.4 184.0M59.0 202.9L118.1 185.2M46.6 205.1L116.6 184.2M46.1 203.8L103.7 186.7M35.5 205.5L106.6 184.5M35.1 204.1L93.6 187.0M34.7 202.8L92.4 186.0M23.8 204.5L95.2 183.8M11.6 205.2L81.1 185.3M12.0 203.7L71.7 186.6M0.0 205.7L70.7 185.6M0.0 204.3L69.8 184.6M0.0 202.9L60.1 186.0M0.0 201.6L59.2 185.0M0.0 200.2L58.4 184.0M0.0 198.9L48.3 185.5M0.0 197.5L47.6 184.4M0.0 194.9L36.5 185.0M0.0 193.7L35.9 183.9M0.0 192.4L23.6 186.0M0.0 191.1L23.2 184.9M0.0 189.9L12.0 186.7M0.0 188.7L11.8 185.5M0.0 187.5L11.6 184.4M11.0 191.4L0.0 186.5M22.1 193.2L0.0 183.5M33.2 191.9L0.0 177.7M44.8 193.8L0.0 175.0M44.8 190.9L11.2 176.9M55.9 192.6L11.2 174.2M67.1 194.3L22.4 176.1M67.1 191.5L33.6 178.0M78.3 193.1L33.6 175.4M89.5 194.8L44.8 177.2M90.7 192.4L56.7 179.3M113.3 195.7L68.0 178.5M113.3 193.0L79.3 180.3M124.7 194.6L79.3 177.8M136.0 196.1L90.7 179.5M147.3 197.6L90.7 177.1M147.3 195.0L102.0 178.8M158.7 196.5L113.3 180.4M170.0 197.9L113.3 178.1M172.2 196.2L126.3 180.3M195.2 199.1L137.8 179.6M197.4 197.4L140.2 178.1M204.1 197.2L158.0 181.8M219.6 199.9L162.4 181.0M226.4 199.7L168.7 180.9M230.4 198.6L173.1 180.1M237.2 198.4L179.5 180.0M241.2 197.4L183.8 179.2M259.6 200.9L201.8 182.7M270.5 199.6L212.6 181.8M274.4 198.6L216.9 181.1M281.4 198.5L223.4 181.0M296.8 200.9L227.7 180.2M303.9 200.8L234.3 180.1M307.7 199.7L250.0 182.8M314.8 199.6L256.7 182.7M330.1 201.9L260.9 181.9M337.4 201.8L267.6 181.9M348.4 200.7L278.5 181.1M352.1 199.6L294.2 183.5M371.0 202.8L301.1 183.5M374.6 201.7L305.2 182.7M382.1 201.7L312.0 182.7M385.6 200.6L316.1 181.9M393.1 200.6L323.0 181.9M408.3 202.7L338.7 184.2M415.9 202.7L345.7 184.2M427.0 201.6L356.7 183.5M442.1 203.5L360.7 182.7M449.9 203.6L367.8 182.7M453.2 202.5L383.3 184.9M461.1 202.6L390.6 184.9M464.3 201.5L394.4 184.1M472.3 201.6L401.7 184.2M487.2 203.4L405.5 183.4M495.3 203.5L412.8 183.5M506.5 202.5L424.0 182.8M509.6 201.4L439.4 184.8M517.8 201.6L447.0 184.9M532.6 203.2L450.6 184.0M541.0 203.4L458.2 184.2M543.8 202.3L461.7 183.4M552.3 202.5L469.4 183.5M566.9 204.0L484.7 185.4M563.7 201.6L480.6 182.8M587.0 203.3L503.8 184.8M589.6 202.2L507.2 184.0M598.4 202.4L515.1 184.2M612.8 203.9L518.4 183.4M609.9 201.6L526.5 183.6M624.2 203.0L541.6 185.3M633.3 203.3L549.8 185.5M635.7 202.2L552.9 184.6M644.9 202.5L561.2 184.9M656.4 201.7L572.6 184.2M670.5 203.0L575.6 183.4M680.0 203.3L584.1 183.6M682.1 202.1L598.9 185.2M691.7 202.5L595.6 183.1M693.7 201.4L610.4 184.6M707.4 202.6L613.2 183.7M717.2 202.9L621.9 184.0M719.0 201.8L624.7 183.2M730.5 201.0L647.9 184.9M740.6 201.4L644.9 182.9M754.0 202.5L659.4 184.3M752.3 200.7L668.5 184.7M765.6 201.7L670.9 183.7M776.0 202.2L680.1 184.1M777.3 201.0L682.5 183.2M787.9 201.5L691.7 183.6M789.0 200.3L705.9 184.9M812.7 201.7L717.5 184.3M811.6 200.1L727.2 184.7M824.5 201.0L729.2 183.8M835.7 201.6L739.0 184.2M836.3 200.3L740.9 183.3M847.7 201.0L750.8 183.7M848.2 199.7L752.6 182.8M859.7 200.3L762.7 183.2M872.0 201.1L776.3 184.4M884.0 200.5L788.1 183.9M884.0 199.1L786.5 182.3M884.0 197.8L799.9 183.4M884.0 196.4L801.1 182.3M884.0 195.1L811.8 182.9M884.0 193.8L824.7 183.9M884.0 192.5L823.7 182.4M884.0 191.3L836.5 183.4M884.0 190.0L835.7 182.0M884.0 187.5L847.7 181.6M884.0 186.3L860.2 182.4M884.0 185.1L871.9 183.1M884.0 183.9L872.1 182.0"/>
<path stroke="#4a4a4a" stroke-width="1" stroke-opacity="0.07" d="M881.6 182.6L884.0 170.8M876.0 185.5L878.7 173.7M872.3 180.5L875.2 168.6M867.9 178.6L871.0 167.0M863.1 178.6L866.4 167.0M858.3 178.6L861.9 167.0M853.7 177.8L857.5 166.4M812.2 174.8L817.6 164.1M807.4 174.8L813.1 164.1M798.4 174.1L804.4 163.6M794.1 173.5L800.2 163.1M789.4 173.5L795.8 163.1M785.2 172.8L791.6 162.6M769.5 182.2L776.3 172.2M765.2 181.5L772.1 171.6M760.4 181.5L767.4 171.6M756.1 180.7L763.2 171.0M747.0 180.0L754.5 170.4M735.3 188.8L742.8 179.3M731.0 188.0L738.6 178.6M726.1 188.0L733.8 178.6M721.8 187.2L729.6 178.0M717.6 186.4L725.5 177.3M712.6 186.4L720.7 177.3M700.3 194.6L716.6 176.7M696.0 193.8L712.4 176.1M686.7 192.9L695.2 184.2M682.5 192.1L691.0 183.6M669.7 199.8L686.9 182.9M665.4 199.0L682.7 182.2M660.3 199.0L677.9 182.2M656.1 198.1L673.8 181.6M651.9 197.3L669.7 181.0M647.4 196.8L656.4 188.7M643.1 196.1L652.1 188.1M625.2 202.7L643.6 187.0M620.8 202.1L639.3 186.5M616.3 201.5L635.0 186.0M611.9 200.9L630.7 185.6M607.4 200.3L616.9 192.8M594.6 206.4L613.5 191.5M590.1 205.8L609.1 191.1M585.5 205.3L604.7 190.7M580.9 204.9L600.2 190.3M563.3 210.1L592.4 188.8M558.6 209.7L588.0 188.5M553.8 209.3L573.6 195.2M550.7 207.8L570.3 194.0M545.9 207.4L565.8 193.7M541.1 207.1L561.1 193.5M528.0 212.4L557.9 192.3M523.1 212.1L553.3 192.1M518.1 211.9L548.6 191.9M510.1 210.2L530.5 197.2M505.1 210.1L525.7 197.0M491.8 215.0L522.6 195.9M486.7 214.9L517.7 195.8M483.7 213.4L514.6 194.6M478.6 213.3L509.8 194.6M475.6 211.9L496.3 199.6M470.4 211.8L491.3 199.5M457.1 216.5L488.3 198.4M449.0 215.0L480.3 197.2M443.5 215.0L475.2 197.2M430.2 219.4L472.2 196.1M424.7 219.5L467.1 196.2M422.0 218.0L453.6 200.8M416.3 218.2L448.4 200.9M413.7 216.7L445.5 199.8M408.0 216.9L440.2 199.9M394.7 221.0L437.3 198.8M386.2 219.8L429.1 197.8M380.3 220.0L423.8 198.0M377.8 218.6L410.1 202.3M371.8 218.9L404.6 202.6M369.3 217.4L401.9 201.4M363.2 217.8L396.2 201.7M349.8 221.7L393.5 200.6M347.4 220.2L390.8 199.5M341.1 220.6L385.2 199.8M332.4 219.6L376.8 199.0M319.1 223.3L363.1 203.0M316.8 221.8L360.5 201.9M310.3 222.3L354.6 202.3M308.0 220.9L352.0 201.2M301.4 221.4L346.1 201.6M299.2 220.0L343.5 200.5M286.0 223.5L330.0 204.2M279.2 224.1L323.8 204.7M270.1 223.3L315.1 204.1M268.1 221.8L312.7 202.9M254.9 225.1L310.4 201.8M259.0 221.1L304.0 202.4M245.8 224.3L301.7 201.3M238.5 225.1L295.3 201.8M236.6 223.7L281.7 205.3M234.7 222.2L279.4 204.2M227.3 223.0L272.8 204.8M212.5 224.6L268.4 202.6M204.7 225.5L261.6 203.3M203.1 224.1L259.5 202.1M195.2 225.0L252.6 202.9M193.6 223.6L250.5 201.8M191.9 222.1L237.1 205.0M183.9 223.1L229.9 205.8M171.0 225.9L227.9 204.6M169.5 224.5L226.0 203.5M159.7 224.1L216.8 203.2M158.3 222.6L203.6 206.2M149.9 223.8L207.5 202.9M148.5 222.3L194.2 205.9M135.8 224.9L192.4 204.7M127.0 226.1L184.7 205.7M125.8 224.6L183.0 204.5M124.7 223.2L181.3 203.3M115.7 224.4L173.5 204.3M105.3 224.3L163.8 204.2M104.3 222.8L162.2 203.1M91.8 225.2L149.2 205.8M93.8 222.7L152.5 203.0M81.3 225.1L139.3 205.7M80.5 223.6L137.9 204.5M70.5 225.1L129.3 205.7M69.8 223.6L128.0 204.5M57.6 225.9L126.7 203.3M46.7 225.9L116.6 203.4M46.2 224.3L103.9 205.9M35.5 226.0L106.4 203.5M35.1 224.5L93.6 206.0M34.7 222.9L92.5 204.7M23.7 224.7L83.0 206.1M23.5 223.1L82.1 204.9M11.6 225.1L81.2 203.6M11.9 223.4L71.4 205.1M0.0 223.8L58.1 206.1M0.0 222.2L57.4 204.8M0.0 220.6L59.0 202.9M0.0 219.0L46.6 205.1M0.0 217.5L46.1 203.8M0.0 215.9L35.5 205.5M0.0 214.4L35.1 204.1M0.0 212.9L34.7 202.8M0.0 211.5L23.8 204.5M0.0 208.6L11.6 205.2M0.0 207.1L12.0 203.7M10.9 204.4L-0.0 199.3M21.8 206.0L0.0 195.9M22.1 202.8L0.0 192.7M33.1 204.5L-0.0 189.6M44.2 206.1L11.0 191.4M55.2 207.7L22.1 193.2M66.3 206.1L33.2 191.9M78.3 208.0L44.8 193.8M89.5 209.5L44.8 190.9M100.7 211.0L55.9 192.6M100.7 208.0L67.1 194.3M111.9 209.4L67.1 191.5M123.1 210.9L78.3 193.1M134.3 212.3L89.5 194.8M136.0 210.0L90.7 192.4M158.7 212.8L113.3 195.7M170.0 214.2L113.3 193.0M170.0 211.3L124.7 194.6M181.3 212.7L136.0 196.1M192.7 214.0L147.3 197.6M204.0 215.3L147.3 195.0M204.0 212.5L158.7 196.5M215.3 213.8L170.0 197.9M229.6 216.1L172.2 196.2M241.1 214.6L195.2 199.1M254.6 216.6L197.4 197.4M261.7 216.3L204.1 197.2M265.5 215.0L219.6 199.9M284.1 218.5L226.4 199.7M287.8 217.1L230.4 198.6M295.0 216.9L237.2 198.4M310.1 219.2L241.2 197.4M317.4 219.0L259.6 200.9M328.4 217.4L270.5 199.6M343.4 219.6L274.4 198.6M350.9 219.4L281.4 198.5M354.3 218.1L296.8 200.9M361.9 218.0L303.9 200.8M376.8 220.0L307.7 199.7M384.5 219.9L314.8 199.6M387.8 218.5L330.1 201.9M407.2 221.8L337.4 201.8M418.2 220.3L348.4 200.7M433.0 222.2L352.1 199.6M441.0 222.1L371.0 202.8M444.1 220.7L374.6 201.7M452.1 220.7L382.1 201.7M466.8 222.5L385.6 200.6M475.0 222.5L393.1 200.6M477.9 221.1L408.3 202.7M486.1 221.1L415.9 202.7M509.1 222.8L427.0 201.6M511.8 221.4L442.1 203.5M520.3 221.5L449.9 203.6M534.7 223.1L453.2 202.5M543.3 223.2L461.1 202.6M545.9 221.8L464.3 201.5M554.6 221.9L472.3 201.6M568.9 223.4L487.2 203.4M566.0 220.6L495.3 203.5M589.1 222.2L506.5 202.5M591.5 220.9L509.6 201.4M600.5 221.0L517.8 201.6M614.6 222.4L532.6 203.2M623.8 222.6L541.0 203.4M625.9 221.2L543.8 202.3M635.2 221.4L552.3 202.5M649.1 222.7L566.9 204.0M658.6 223.0L563.7 201.6M670.1 221.8L587.0 203.3M672.0 220.4L589.6 202.2M681.7 220.7L598.4 202.4M695.3 221.9L612.8 203.9M705.2 222.2L609.9 201.6M706.9 220.8L624.2 203.0M716.9 221.1L633.3 203.3M730.3 222.2L635.7 202.2M728.6 220.1L644.9 202.5M752.3 221.6L656.4 201.7M753.5 220.1L670.5 203.0M764.0 220.5L680.0 203.3M777.1 221.5L682.1 202.1M775.8 219.5L691.7 202.5M788.8 220.5L693.7 201.4M789.8 219.0L707.4 202.6M800.6 219.5L717.2 202.9M813.3 220.4L719.0 201.8M825.0 219.4L730.5 201.0M836.2 219.9L740.6 201.4M836.7 218.4L754.0 202.5M848.1 219.0L752.3 200.7M860.3 219.7L765.6 201.7M860.0 218.1L776.0 202.2M872.1 218.8L777.3 201.0M884.0 219.4L787.9 201.5M884.0 217.9L789.0 200.3M884.0 214.8L812.7 201.7M884.0 213.3L811.6 200.1M884.0 211.8L824.5 201.0M884.0 210.3L835.7 201.6M884.0 208.9L836.3 200.3M884.0 207.4L847.7 201.0M884.0 206.0L848.2 199.7M884.0 204.6L859.7 200.3M884.0 203.2L872.0 201.1"/>
<path stroke="#4a4a4a" stroke-width="1" stroke-opacity="0.1" d="M879.1 194.4L881.6 182.6M869.3 192.3L872.3 180.5M864.8 190.3L867.9 178.6M844.4 177.0L848.6 165.8M839.6 177.0L844.0 165.8M834.9 177.0L839.5 165.8M830.4 176.3L835.2 165.2M825.7 176.3L830.6 165.2M821.3 175.5L826.4 164.6M816.5 175.5L821.9 164.6M792.4 184.7L798.4 174.1M788.0 183.8L794.1 173.5M783.1 183.8L789.4 173.5M778.7 183.0L785.2 172.8M773.9 183.0L780.5 172.8M762.8 192.3L769.5 182.2M758.4 191.4L765.2 181.5M753.3 191.4L760.4 181.5M749.0 190.5L756.1 180.7M732.2 199.2L747.0 180.0M727.8 198.2L735.3 188.8M723.4 197.3L731.0 188.0M718.3 197.3L726.1 188.0M714.0 196.4L721.8 187.2M701.7 204.6L717.6 186.4M696.5 204.6L712.6 186.4M692.1 203.6L700.3 194.6M687.8 202.6L696.0 193.8M669.8 210.4L686.7 192.9M665.4 209.3L682.5 192.1M661.1 208.3L669.7 199.8M656.8 207.3L665.4 199.0M651.5 207.3L660.3 199.0M638.4 214.7L656.1 198.1M634.1 213.6L651.9 197.3M629.4 212.9L647.4 196.8M625.0 212.1L643.1 196.1M606.8 218.4L625.2 202.7M602.2 217.6L620.8 202.1M597.6 216.9L616.3 201.5M593.0 216.2L611.9 200.9M578.9 223.1L607.4 200.3M575.8 221.2L594.6 206.4M571.0 220.6L590.1 205.8M566.3 220.0L585.5 205.3M551.8 226.7L580.9 204.9M543.9 224.3L563.3 210.1M539.0 223.8L558.6 209.7M534.0 223.3L553.8 209.3M521.2 228.4L550.7 207.8M516.1 228.0L545.9 207.4M511.0 227.6L541.1 207.1M498.1 232.5L528.0 212.4M492.9 232.2L523.1 212.1M487.7 231.9L518.1 211.9M479.5 229.8L510.1 210.2M474.2 229.6L505.1 210.1M461.1 234.2L491.8 215.0M455.6 234.0L486.7 214.9M452.9 232.2L483.7 213.4M447.4 232.1L478.6 213.3M434.3 236.5L475.6 211.9M428.6 236.4L470.4 211.8M426.0 234.6L457.1 216.5M407.2 238.7L449.0 215.0M401.3 238.8L443.5 215.0M398.8 236.9L430.2 219.4M392.8 237.0L424.7 219.5M379.8 241.0L422.0 218.0M373.6 241.1L416.3 218.2M371.2 239.3L413.7 216.7M365.0 239.5L408.0 216.9M352.0 243.3L394.7 221.0M343.3 241.7L386.2 219.8M336.8 242.0L380.3 220.0M323.8 245.6L377.8 218.6M317.1 246.0L371.8 218.9M315.0 244.2L369.3 217.4M308.2 244.6L363.2 217.8M306.1 242.8L349.8 221.7M293.1 246.2L347.4 220.2M286.1 246.7L341.1 220.6M277.0 245.4L332.4 219.6M264.1 248.7L319.1 223.3M262.2 246.8L316.8 221.8M254.9 247.4L310.3 222.3M253.0 245.6L308.0 220.9M245.6 246.3L301.4 221.4M232.7 249.4L299.2 220.0M231.0 247.5L286.0 223.5M223.3 248.3L279.2 224.1M213.8 247.3L270.1 223.3M201.1 250.2L268.1 221.8M199.5 248.4L254.9 225.1M191.4 249.3L259.0 221.1M178.8 252.0L245.8 224.3M181.7 248.4L238.5 225.1M169.0 251.2L236.6 223.7M167.7 249.3L234.7 222.2M159.1 250.4L227.3 223.0M145.4 251.1L212.5 224.6M136.5 252.2L204.7 225.5M135.4 250.4L203.1 224.1M126.3 251.6L195.2 225.0M125.2 249.7L193.6 223.6M112.9 252.2L191.9 222.1M115.0 249.1L183.9 223.1M102.6 251.6L171.0 225.9M101.7 249.7L169.5 224.5M91.3 249.2L159.7 224.1M79.2 251.5L158.3 222.6M69.2 252.9L149.9 223.8M68.5 251.0L148.5 222.3M67.9 249.1L135.8 224.9M57.7 250.7L127.0 226.1M45.8 252.8L125.8 224.6M45.3 250.9L124.7 223.2M34.7 252.6L115.7 224.4M23.4 252.4L105.3 224.3M23.2 250.4L104.3 222.8M11.5 252.4L91.8 225.2M11.7 250.3L93.8 222.7M11.6 248.4L81.3 225.1M0.0 250.3L80.5 223.6M0.0 248.4L70.5 225.1M0.0 246.5L69.8 223.6M0.0 244.6L57.6 225.9M0.0 240.9L46.7 225.9M0.0 239.1L46.2 224.3M0.0 237.3L35.5 226.0M0.0 235.6L35.1 224.5M0.0 233.8L34.7 222.9M0.0 232.1L23.7 224.7M0.0 230.4L23.5 223.1M0.0 228.7L11.6 225.1M0.0 227.0L11.9 223.4M21.6 220.4L0.0 209.8M21.8 216.7L0.0 206.2M32.7 218.3L0.0 202.7M43.7 219.7L10.9 204.4M54.6 221.2L21.8 206.0M66.3 223.0L22.1 202.8M77.3 224.4L33.1 204.5M77.4 220.8L44.2 206.1M88.4 222.2L55.2 207.7M110.5 224.9L66.3 206.1M123.1 226.9L78.3 208.0M134.3 228.2L89.5 209.5M145.5 229.5L100.7 211.0M145.5 226.1L100.7 208.0M156.7 227.4L111.9 209.4M167.8 228.6L123.1 210.9M179.0 229.8L134.3 212.3M192.7 231.9L136.0 210.0M215.3 234.3L158.7 212.8M215.3 231.2L170.0 214.2M226.7 232.3L170.0 211.3M238.0 233.4L181.3 212.7M249.3 234.5L192.7 214.0M260.7 235.6L204.0 215.3M272.0 236.6L204.0 212.5M283.3 237.6L215.3 213.8M287.0 236.0L229.6 216.1M310.0 238.0L241.1 214.6M323.3 239.6L254.6 216.6M330.8 239.3L261.7 216.3M345.6 241.4L265.5 215.0M353.3 241.1L284.1 218.5M356.6 239.3L287.8 217.1M375.8 242.7L295.0 216.9M379.0 241.0L310.1 219.2M386.8 240.7L317.4 219.0M409.4 242.4L328.4 217.4M423.9 244.1L343.4 219.6M432.0 243.9L350.9 219.4M434.9 242.2L354.3 218.1M454.7 245.5L361.9 218.0M457.5 243.7L376.8 220.0M465.8 243.6L384.5 219.9M480.1 245.2L387.8 218.5M488.6 245.0L407.2 221.8M511.4 246.5L418.2 220.3M513.9 244.7L433.0 222.2M522.6 244.7L441.0 222.1M536.7 246.1L444.1 220.7M545.5 246.1L452.1 220.7M559.5 247.4L466.8 222.5M568.5 247.4L475.0 222.5M570.7 245.7L477.9 221.1M579.8 245.7L486.1 221.1M602.8 247.1L509.1 222.8M604.9 245.3L511.8 221.4M614.2 245.4L520.3 221.5M627.8 246.6L534.7 223.1M637.3 246.7L543.3 223.2M639.2 244.9L545.9 221.8M648.7 245.1L554.6 221.9M662.2 246.2L568.9 223.4M672.0 246.4L566.0 220.6M683.5 244.8L589.1 222.2M696.8 245.8L591.5 220.9M706.8 246.1L600.5 221.0M708.3 244.3L614.6 222.4M718.4 244.6L623.8 222.6M731.5 245.5L625.9 221.2M741.8 245.8L635.2 221.4M743.1 244.0L649.1 222.7M753.5 244.4L658.6 223.0M765.2 243.0L670.1 221.8M778.0 243.8L672.0 220.4M788.8 244.2L681.7 220.7M789.7 242.4L695.3 221.9M800.6 242.8L705.2 222.2M813.1 243.6L706.9 220.8M812.4 241.5L716.9 221.1M824.9 242.3L730.3 222.2M836.2 242.7L728.6 220.1M848.1 241.5L752.3 221.6M860.3 242.1L753.5 220.1M860.0 240.2L764.0 220.5M872.1 240.9L777.1 221.5M884.0 241.4L775.8 219.5M884.0 239.6L788.8 220.5M884.0 237.8L789.8 219.0M884.0 236.1L800.6 219.5M884.0 234.3L813.3 220.4M884.0 230.9L825.0 219.4M884.0 229.2L836.2 219.9M884.0 227.5L836.7 218.4M884.0 225.9L848.1 219.0M884.0 224.2L860.3 219.7M884.0 222.6L860.0 218.1M884.0 221.0L872.1 218.8"/>
<path stroke="#4a4a4a" stroke-width="1" stroke-opacity="0.14" d="M881.8 207.9L884.0 195.8M876.7 206.2L879.1 194.4M873.3 197.2L876.0 185.5M859.7 190.3L863.1 178.6M854.7 190.3L858.3 178.6M849.9 189.3L853.7 177.8M840.3 188.3L844.4 177.0M835.3 188.3L839.6 177.0M830.3 188.3L834.9 177.0M825.7 187.3L830.4 176.3M820.7 187.3L825.7 176.3M816.1 186.4L821.3 175.5M811.2 186.4L816.5 175.5M806.7 185.5L812.2 174.8M801.8 185.5L807.4 174.8M781.9 194.2L788.0 183.8M776.8 194.2L783.1 183.8M772.3 193.2L778.7 183.0M767.2 193.2L773.9 183.0M756.0 202.3L762.8 192.3M751.5 201.3L758.4 191.4M746.3 201.3L753.3 191.4M741.8 200.2L749.0 190.5M724.8 208.8L732.2 199.2M720.3 207.7L727.8 198.2M715.9 206.6L723.4 197.3M710.6 206.6L718.3 197.3M698.3 214.8L714.0 196.4M693.8 213.6L701.7 204.6M688.4 213.6L696.5 204.6M684.0 212.5L692.1 203.6M671.3 220.2L687.8 202.6M661.3 219.1L669.8 210.4M648.4 226.5L665.4 209.3M644.0 225.3L661.1 208.3M639.5 224.1L656.8 207.3M633.9 224.1L651.5 207.3M620.7 231.2L638.4 214.7M616.3 230.0L634.1 213.6M611.4 229.1L629.4 212.9M597.8 236.1L625.0 212.1M588.4 234.1L606.8 218.4M583.7 233.2L602.2 217.6M569.6 240.0L597.6 216.9M564.8 239.2L593.0 216.2M559.9 238.3L578.9 223.1M547.4 243.5L575.8 221.2M542.5 242.7L571.0 220.6M537.5 242.0L566.3 220.0M522.8 248.6L551.8 226.7M505.0 252.7L543.9 224.3M499.8 252.0L539.0 223.8M494.5 251.4L534.0 223.3M481.8 256.0L521.2 228.4M466.5 262.3L516.1 228.0M460.9 261.8L511.0 227.6M448.3 266.0L498.1 232.5M442.6 265.6L492.9 232.2M436.9 265.2L487.7 231.9M418.3 268.9L479.5 229.8M412.3 268.6L474.2 229.6M399.6 272.5L461.1 234.2M393.5 272.3L455.6 234.0M380.8 276.0L452.9 232.2M374.5 275.9L447.4 232.1M361.9 279.5L434.3 236.5M355.4 279.4L428.6 236.4M342.9 282.8L426.0 234.6M323.7 286.1L407.2 238.7M316.8 286.2L401.3 238.8M314.8 283.6L398.8 236.9M297.3 289.5L392.8 237.0M295.4 286.9L379.8 241.0M288.2 287.1L373.6 241.1M275.8 290.1L371.2 239.3M268.4 290.4L365.0 239.5M256.0 293.4L352.0 243.3M246.8 291.1L343.3 241.7M239.1 291.5L336.8 242.0M226.7 294.3L323.8 245.6M218.7 294.9L317.1 246.0M217.2 292.2L315.0 244.2M209.1 292.8L308.2 244.6M196.8 295.5L306.1 242.8M195.4 292.9L293.1 246.2M187.1 293.6L286.1 246.7M166.2 296.9L277.0 245.4M165.0 294.3L264.1 248.7M152.9 296.7L262.2 246.8M144.1 297.6L254.9 247.4M143.0 295.0L253.0 245.6M134.0 296.0L245.6 246.3M121.9 298.3L232.7 249.4M121.0 295.7L231.0 247.5M111.7 296.8L223.3 248.3M101.3 295.3L213.8 247.3M89.4 297.5L201.1 250.2M77.6 299.6L199.5 248.4M78.8 296.2L191.4 249.3M67.0 298.2L178.8 252.0M56.8 299.6L181.7 248.4M56.3 297.0L169.0 251.2M44.7 298.9L167.7 249.3M45.5 295.9L159.1 250.4M33.5 295.2L145.4 251.1M22.7 296.8L136.5 252.2M11.3 298.6L135.4 250.4M11.5 295.9L126.3 251.6M0.0 297.7L125.2 249.7M0.0 295.1L112.9 252.2M0.0 292.5L115.0 249.1M0.0 290.0L102.6 251.6M0.0 287.5L101.7 249.7M0.0 282.7L91.3 249.2M0.0 280.3L79.2 251.5M0.0 278.0L69.2 252.9M0.0 275.7L68.5 251.0M0.0 273.4L67.9 249.1M0.0 271.1L57.7 250.7M0.0 268.9L45.8 252.8M0.0 266.8L45.3 250.9M0.0 264.6L34.7 252.6M0.0 260.4L23.4 252.4M0.0 258.3L23.2 250.4M0.0 256.3L11.5 252.4M0.0 254.3L11.7 250.3M0.0 252.3L11.6 248.4M10.7 230.9L0.0 225.3M21.6 232.3L0.0 221.3M32.3 233.7L0.0 217.3M53.9 236.2L21.6 220.4M65.5 237.8L21.8 216.7M76.4 239.0L32.7 218.3M87.3 240.2L43.7 219.7M98.2 241.4L54.6 221.2M110.5 243.1L66.3 223.0M121.5 244.3L77.3 224.4M132.6 245.4L77.4 220.8M143.6 246.5L88.4 222.2M176.8 253.3L110.5 224.9M190.2 255.2L123.1 226.9M201.4 256.1L134.3 228.2M212.6 257.1L145.5 229.5M235.0 262.5L145.5 226.1M246.2 263.3L156.7 227.4M257.4 264.1L167.8 228.6M279.7 269.3L179.0 229.8M283.3 267.1L192.7 231.9M317.3 272.9L215.3 234.3M328.7 273.6L215.3 231.2M340.0 274.2L226.7 232.3M362.7 279.0L238.0 233.4M374.0 279.6L249.3 234.5M385.3 280.2L260.7 235.6M396.7 280.8L272.0 236.6M408.0 281.3L283.3 237.6M424.8 283.7L287.0 236.0M447.7 284.8L310.0 238.0M460.6 285.8L323.3 239.6M469.1 285.3L330.8 239.3M483.1 286.6L345.6 241.4M491.7 286.2L353.3 241.1M505.6 287.4L356.6 239.3M514.4 287.0L375.8 242.7M528.2 288.2L379.0 241.0M537.1 287.8L386.8 240.7M559.9 288.6L409.4 242.4M573.4 289.7L423.9 244.1M582.7 289.4L432.0 243.9M596.1 290.4L434.9 242.2M605.5 290.2L454.7 245.5M618.9 291.1L457.5 243.7M628.4 290.9L465.8 243.6M641.7 291.8L480.1 245.2M651.4 291.6L488.6 245.0M662.8 289.0L511.4 246.5M675.8 289.8L513.9 244.7M685.8 289.7L522.6 244.7M698.8 290.5L536.7 246.1M708.9 290.4L545.5 246.1M710.2 288.0L559.5 247.4M720.4 288.0L568.5 247.4M733.2 288.7L570.7 245.7M743.6 288.7L579.8 245.7M755.1 286.4L602.8 247.1M767.7 287.0L604.9 245.3M778.4 287.1L614.2 245.4M790.9 287.7L627.8 246.6M790.0 284.9L637.3 246.7M802.4 285.5L639.2 244.9M813.4 285.7L648.7 245.1M814.0 283.3L662.2 246.2M825.1 283.5L672.0 246.4M848.6 284.3L683.5 244.8M848.9 281.9L696.8 245.8M860.4 282.2L706.8 246.1M872.3 282.7L708.3 244.3M872.2 280.3L718.4 244.6M884.0 280.7L731.5 245.5M884.0 278.3L741.8 245.8M884.0 276.1L743.1 244.0M884.0 273.8L753.5 244.4M884.0 269.4L765.2 243.0M884.0 267.2L778.0 243.8M884.0 265.1L788.8 244.2M884.0 263.0L789.7 242.4M884.0 260.9L800.6 242.8M884.0 258.8L813.1 243.6M884.0 256.8L812.4 241.5M884.0 254.8L824.9 242.3M884.0 252.8L836.2 242.7M884.0 248.9L848.1 241.5M884.0 247.0L860.3 242.1M884.0 245.1L860.0 240.2M884.0 243.3L872.1 240.9"/>
<path stroke="#4a4a4a" stroke-width="1" stroke-opacity="0.18" d="M879.5 219.9L881.8 207.9M874.2 218.0L876.7 206.2M870.7 209.0L873.3 197.2M866.4 204.2L869.3 192.3M861.7 202.0L864.8 190.3M856.4 202.0L859.7 190.3M851.1 202.0L854.7 190.3M846.2 200.7L849.9 189.3M836.1 199.6L840.3 188.3M830.9 199.6L835.3 188.3M811.0 197.3L816.1 186.4M805.9 197.3L811.2 186.4M801.2 196.2L806.7 185.5M796.1 196.2L801.8 185.5M786.4 195.2L792.4 184.7M775.7 204.6L781.9 194.2M770.4 204.6L776.8 194.2M765.9 203.4L772.3 193.2M760.6 203.4L767.2 193.2M749.3 212.4L756.0 202.3M744.7 211.2L751.5 201.3M739.3 211.2L746.3 201.3M727.6 219.7L741.8 200.2M717.4 218.4L724.8 208.8M712.8 217.2L720.3 207.7M700.7 225.3L715.9 206.6M695.0 225.3L710.6 206.6M690.5 224.0L698.3 214.8M678.0 231.8L693.8 213.6M672.2 231.8L688.4 213.6M667.6 230.4L684.0 212.5M654.9 237.9L671.3 220.2M636.0 245.2L661.3 219.1M631.4 243.7L648.4 226.5M618.2 250.7L644.0 225.3M613.6 249.2L639.5 224.1M598.7 257.6L633.9 224.1M594.1 256.0L620.7 231.2M580.6 262.6L616.3 230.0M566.5 269.6L611.4 229.1M561.6 268.2L597.8 236.1M533.3 281.3L588.4 234.1M528.1 279.9L583.7 233.2M513.6 286.3L569.6 240.0M508.3 285.1L564.8 239.2M493.5 291.5L559.9 238.3M481.4 295.6L547.4 243.5M466.3 301.8L542.5 242.7M460.7 300.6L537.5 242.0M445.3 306.9L522.8 248.6M427.3 309.5L505.0 252.7M411.6 315.6L499.8 252.0M405.5 314.7L494.5 251.4M393.3 318.0L481.8 256.0M387.1 317.2L466.5 262.3M370.8 323.3L460.9 261.8M358.6 326.4L448.3 266.0M352.1 325.7L442.6 265.6M345.4 325.1L436.9 265.2M326.5 327.6L418.3 268.9M309.2 333.6L412.3 268.6M297.2 336.4L399.6 272.5M289.9 336.0L393.5 272.3M277.9 338.6L380.8 276.0M270.5 338.4L374.5 275.9M258.5 340.9L361.9 279.5M250.9 340.8L355.4 279.4M239.0 343.2L342.9 282.8M229.7 339.5L323.7 286.1M211.2 345.5L316.8 286.2M209.9 341.9L314.8 283.6M201.7 342.0L297.3 289.5M189.9 344.2L295.4 286.9M181.5 344.5L288.2 287.1M169.7 346.6L275.8 290.1M161.0 347.0L268.4 290.4M149.3 349.0L256.0 293.4M139.5 345.9L246.8 291.1M130.4 346.5L239.1 291.5M118.7 348.4L226.7 294.3M109.3 349.2L218.7 294.9M108.6 345.6L217.2 292.2M99.1 346.4L209.1 292.8M87.5 348.3L196.8 295.5M76.0 350.0L195.4 292.9M77.0 345.7L187.1 293.6M55.4 348.5L166.2 296.9M44.0 350.1L165.0 294.3M43.7 346.6L152.9 296.7M33.2 347.8L144.1 297.6M22.0 349.3L143.0 295.0M22.3 345.7L134.0 296.0M11.1 347.2L121.9 298.3M0.0 348.6L121.0 295.7M0.0 345.2L111.7 296.8M0.0 338.6L101.3 295.3M0.0 335.3L89.4 297.5M0.0 332.1L77.6 299.6M0.0 329.0L78.8 296.2M0.0 325.9L67.0 298.2M0.0 322.9L56.8 299.6M0.0 319.9L56.3 297.0M0.0 317.0L44.7 298.9M0.0 314.1L45.5 295.9M0.0 308.4L33.5 295.2M0.0 305.7L22.7 296.8M0.0 303.0L11.3 298.6M0.0 300.3L11.5 295.9M21.0 254.5L0.0 242.9M32.0 255.7L0.0 238.3M53.3 262.4L0.0 233.8M63.9 263.3L0.0 229.5M85.2 269.6L10.7 230.9M97.0 271.0L21.6 232.3M118.6 277.2L32.3 233.7M150.9 283.7L53.9 236.2M174.6 290.5L65.5 237.8M185.5 291.0L76.4 239.0M207.4 296.5L87.3 240.2M218.3 296.9L98.2 241.4M243.1 303.6L110.5 243.1M254.1 304.0L121.5 244.3M276.2 309.2L132.6 245.4M287.3 309.4L143.6 246.5M320.5 314.6L176.8 253.3M335.7 316.5L190.2 255.2M358.1 321.4L201.4 256.1M369.3 321.5L212.6 257.1M391.6 326.2L235.0 262.5M402.8 326.2L246.2 263.3M425.2 330.7L257.4 264.1M436.4 330.7L279.7 269.3M453.3 332.9L283.3 267.1M476.0 332.9L317.3 272.9M498.7 337.2L328.7 273.6M510.0 337.1L340.0 274.2M521.3 337.1L362.7 279.0M532.7 337.0L374.0 279.6M544.0 337.0L385.3 280.2M566.7 340.9L396.7 280.8M578.0 340.8L408.0 281.3M585.5 339.4L424.8 283.7M608.5 339.4L447.7 284.8M620.8 339.6L460.6 285.8M642.0 342.8L469.1 285.3M643.5 339.4L483.1 286.6M664.8 342.6L491.7 286.2M666.1 339.2L505.6 287.4M687.7 342.4L514.4 287.0M688.9 339.1L528.2 288.2M699.0 338.6L537.1 287.8M721.9 338.5L559.9 288.6M734.5 338.7L573.4 289.7M744.9 338.4L582.7 289.4M757.3 338.6L596.1 290.4M768.0 338.3L605.5 290.2M780.3 338.5L618.9 291.1M791.1 338.2L628.4 290.9M791.7 335.0L641.7 291.8M802.6 334.8L651.4 291.6M825.8 334.8L662.8 289.0M837.7 334.9L675.8 289.8M837.4 331.6L685.8 289.7M849.3 331.7L698.8 290.5M860.7 331.6L708.9 290.4M872.4 331.7L710.2 288.0M884.0 331.7L720.4 288.0M884.0 328.6L733.2 288.7M884.0 325.6L743.6 288.7M884.0 319.7L755.1 286.4M884.0 316.8L767.7 287.0M884.0 314.0L778.4 287.1M884.0 311.2L790.9 287.7M884.0 308.4L790.0 284.9M884.0 305.7L802.4 285.5M884.0 303.1L813.4 285.7M884.0 300.4L814.0 283.3M884.0 297.8L825.1 283.5M884.0 292.8L848.6 284.3M884.0 290.3L848.9 281.9M884.0 287.8L860.4 282.2M884.0 285.4L872.3 282.7M884.0 283.0L872.2 280.3"/>
<path stroke="#4a4a4a" stroke-width="1" stroke-opacity="0.24" d="M882.0 238.9L884.0 227.0M877.3 231.9L879.5 219.9M871.8 229.8L874.2 218.0M868.0 220.7L870.7 209.0M863.5 216.0L866.4 204.2M858.5 213.6L861.7 202.0M853.0 213.6L856.4 202.0M847.5 213.6L851.1 202.0M842.4 212.2L846.2 200.7M831.9 210.8L836.1 199.6M825.6 199.6L830.3 188.3M820.9 198.4L825.7 187.3M815.7 198.4L820.7 187.3M800.5 208.2L805.9 197.3M795.8 206.9L801.2 196.2M790.4 206.9L796.1 196.2M780.4 205.7L786.4 195.2M769.6 214.9L775.7 204.6M764.1 214.9L770.4 204.6M759.4 213.6L765.9 203.4M747.3 223.8L760.6 203.4M742.6 222.4L749.3 212.4M737.9 221.0L744.7 211.2M725.2 230.9L739.3 211.2M720.5 229.5L727.6 219.7M702.6 237.6L717.4 218.4M697.9 236.1L712.8 217.2M685.6 243.9L700.7 225.3M679.5 243.9L695.0 225.3M667.0 251.6L690.5 224.0M654.3 259.0L678.0 231.8M639.9 268.0L672.2 231.8M626.9 275.1L667.6 230.4M613.8 282.0L654.9 237.9M593.7 288.7L636.0 245.2M580.3 295.2L631.4 243.7M566.8 301.6L618.2 250.7M553.2 307.8L613.6 249.2M537.1 316.2L598.7 257.6M532.1 313.8L594.1 256.0M518.3 319.7L580.6 262.6M503.5 326.3L566.5 269.6M489.1 332.3L561.6 268.2M459.7 344.1L533.3 281.3M454.0 342.2L528.1 279.9M438.9 348.1L513.6 286.3M423.6 354.0L508.3 285.1M408.1 359.8L493.5 291.5M396.4 362.5L481.4 295.6M390.2 360.8L466.3 301.8M374.3 366.6L460.7 300.6M358.2 372.4L445.3 306.9M339.9 373.3L427.3 309.5M323.4 379.1L411.6 315.6M316.5 377.9L405.5 314.7M304.8 380.0L393.3 318.0M287.8 385.8L387.1 317.2M280.6 384.8L370.8 323.3M269.0 386.7L358.6 326.4M251.5 392.5L352.1 325.7M243.8 391.7L345.4 325.1M224.4 392.7L326.5 327.6M216.5 392.2L309.2 333.6M204.9 393.8L297.2 336.4M196.7 393.4L289.9 336.0M185.3 395.0L277.9 338.6M166.5 401.0L270.5 338.4M165.4 396.2L258.5 340.9M146.4 402.2L250.9 340.8M145.5 397.5L239.0 343.2M125.3 398.8L229.7 339.5M116.2 398.9L211.2 345.5M104.9 400.2L209.9 341.9M95.6 400.4L201.7 342.0M84.4 401.6L189.9 344.2M74.7 402.0L181.5 344.5M63.6 403.1L169.7 346.6M53.7 403.6L161.0 347.0M53.3 399.1L149.3 349.0M32.2 400.8L139.5 345.9M21.7 401.5L130.4 346.5M10.8 402.5L118.7 348.4M10.9 398.0L109.3 349.2M0.0 399.0L108.6 345.6M0.0 394.7L99.1 346.4M0.0 390.5L87.5 348.3M0.0 386.3L76.0 350.0M0.0 382.2L77.0 345.7M0.0 374.3L55.4 348.5M0.0 370.4L44.0 350.1M0.0 366.6L43.7 346.6M0.0 362.9L33.2 347.8M0.0 359.2L22.0 349.3M0.0 355.6L22.3 345.7M0.0 352.1L11.1 347.2M10.3 280.1L0.0 273.8M30.9 286.9L0.0 268.2M51.8 293.5L0.0 262.8M84.2 300.8L0.0 252.5M105.2 306.9L0.0 247.6M126.3 312.9L21.0 254.5M149.1 319.6L32.0 255.7M170.4 325.3L53.3 262.4M191.7 330.8L63.9 263.3M213.0 336.1L85.2 269.6M226.4 337.2L97.0 271.0M248.0 342.4L118.6 277.2M291.1 352.3L150.9 283.7M316.5 359.0L174.6 290.5M338.3 363.7L185.5 291.0M349.2 363.1L207.4 296.5M371.1 367.6L218.3 296.9M397.8 374.2L243.1 303.6M408.8 373.6L254.1 304.0M430.9 377.9L276.2 309.2M453.1 382.1L287.3 309.4M486.2 385.4L320.5 314.6M503.5 387.3L335.7 316.5M514.7 386.6L358.1 321.4M537.1 390.5L369.3 321.5M548.3 389.8L391.6 326.2M570.7 393.6L402.8 326.2M581.9 392.8L425.2 330.7M593.1 392.1L436.4 330.7M612.0 394.4L453.3 332.9M634.7 393.0L476.0 332.9M646.0 392.3L498.7 337.2M668.7 395.8L510.0 337.1M680.0 395.1L521.3 337.1M691.3 394.4L532.7 337.0M702.7 393.8L544.0 337.0M714.0 393.1L566.7 340.9M725.3 392.5L578.0 340.8M734.8 391.2L585.5 339.4M757.7 390.0L608.5 339.4M769.6 389.6L620.8 339.6M780.3 388.8L642.0 342.8M792.4 388.4L643.5 339.4M803.2 387.7L664.8 342.6M815.2 387.3L666.1 339.2M826.3 386.7L687.7 342.4M838.1 386.3L688.9 339.1M849.3 385.7L699.0 338.6M872.4 384.8L721.9 338.5M884.0 384.3L734.5 338.7M884.0 380.4L744.9 338.4M884.0 376.5L757.3 338.6M884.0 372.7L768.0 338.3M884.0 368.9L780.3 338.5M884.0 365.3L791.1 338.2M884.0 361.6L791.7 335.0M884.0 358.1L802.6 334.8M884.0 351.2L825.8 334.8M884.0 347.8L837.7 334.9M884.0 344.5L837.4 331.6M884.0 341.2L849.3 331.7M884.0 338.0L860.7 331.6M884.0 334.8L872.4 331.7"/>
<path stroke="#4a4a4a" stroke-width="1" stroke-opacity="0.3" d="M878.1 262.6L882.0 238.9M872.8 255.9L877.3 231.9M866.9 253.5L871.8 229.8M862.6 244.3L868.0 220.7M857.6 239.7L863.5 216.0M852.3 236.9L858.5 213.6M849.6 225.3L853.0 213.6M843.9 225.3L847.5 213.6M838.7 223.6L842.4 212.2M827.8 222.1L831.9 210.8M826.5 210.8L830.9 199.6M821.0 210.8L825.6 199.6M816.2 209.5L820.9 198.4M810.7 209.5L815.7 198.4M800.8 219.1L811.0 197.3M795.2 219.1L800.5 208.2M790.3 217.6L795.8 206.9M784.7 217.6L790.4 206.9M768.4 226.8L780.4 205.7M763.5 225.3L769.6 214.9M757.8 225.3L764.1 214.9M746.5 234.0L759.4 213.6M740.6 234.0L747.3 223.8M729.1 242.5L742.6 222.4M724.2 240.8L737.9 221.0M711.1 250.7L725.2 230.9M699.1 258.7L720.5 229.5M672.9 276.0L702.6 237.6M660.4 283.4L697.9 236.1M647.7 290.6L685.6 243.9M633.0 299.9L679.5 243.9M620.0 306.7L667.0 251.6M606.9 313.4L654.3 259.0M591.3 322.5L639.9 268.0M577.9 328.8L626.9 275.1M564.5 335.0L613.8 282.0M534.5 349.7L593.7 288.7M512.1 364.0L580.3 295.2M498.2 369.5L566.8 301.6M484.1 374.8L553.2 307.8M466.7 383.2L537.1 316.2M452.4 388.2L532.1 313.8M438.1 393.2L518.3 319.7M422.6 399.1L503.5 326.3M407.6 404.3L489.1 332.3M377.0 414.8L459.7 344.1M361.3 420.0L454.0 342.2M354.9 417.5L438.9 348.1M338.9 422.8L423.6 354.0M322.7 428.2L408.1 359.8M311.5 429.4L396.4 362.5M295.0 434.7L390.2 360.8M278.3 440.0L374.3 366.6M271.1 438.0L358.2 372.4M242.8 444.3L339.9 373.3M235.2 442.7L323.4 379.1M217.6 448.1L316.5 377.9M206.5 448.9L304.8 380.0M198.5 447.5L287.8 385.8M180.4 453.1L280.6 384.8M169.4 453.7L269.0 386.7M161.0 452.6L251.5 392.5M152.4 451.6L243.8 391.7M122.4 457.9L224.4 392.7M113.4 457.2L216.5 392.2M102.5 457.7L204.9 393.8M93.2 457.2L196.7 393.4M82.3 457.6L185.3 395.0M72.8 457.3L166.5 401.0M62.0 457.7L165.4 396.2M52.3 457.5L146.4 402.2M41.6 457.8L145.5 397.5M20.9 458.1L125.3 398.8M10.6 458.2L116.2 398.9M10.5 452.6L104.9 400.2M0.0 452.9L95.6 400.4M0.0 447.5L84.4 401.6M0.0 442.2L74.7 402.0M0.0 437.0L63.6 403.1M0.0 431.9L53.7 403.6M0.0 426.9L53.3 399.1M0.0 417.2L32.2 400.8M0.0 412.5L21.7 401.5M0.0 407.9L10.8 402.5M0.0 403.4L10.9 398.0M20.1 311.8L0.0 298.4M50.6 324.8L0.0 291.9M71.2 331.1L0.0 285.7M92.0 337.2L0.0 279.7M112.9 343.3L10.3 280.1M134.1 349.2L30.9 286.9M165.7 361.1L51.8 293.5M210.5 373.1L84.2 300.8M231.5 378.1L105.2 306.9M263.1 388.7L126.3 312.9M287.6 395.1L149.1 319.6M308.9 399.6L170.4 325.3M330.2 403.9L191.7 330.8M362.1 413.7L213.0 336.1M388.1 420.0L226.4 337.2M409.7 424.0L248.0 342.4M452.8 431.5L291.1 352.3M469.3 432.7L316.5 359.0M491.1 436.4L338.3 363.7M512.9 439.9L349.2 363.1M534.8 443.4L371.1 367.6M552.5 444.8L397.8 374.2M563.5 443.3L408.8 373.6M585.6 446.6L430.9 377.9M596.7 445.1L453.1 382.1M629.9 446.8L486.2 385.4M649.0 448.7L503.5 387.3M660.2 447.2L514.7 386.6M682.6 450.4L537.1 390.5M693.8 448.9L548.3 389.8M705.0 447.5L570.7 393.6M716.2 446.1L581.9 392.8M738.5 449.1L593.1 392.1M748.0 447.0L612.0 394.4M770.7 444.4L634.7 393.0M782.0 443.2L646.0 392.3M793.3 442.0L668.7 395.8M804.7 440.7L680.0 395.1M827.3 443.7L691.3 394.4M838.7 442.5L702.7 393.8M850.0 441.3L714.0 393.1M861.3 440.1L725.3 392.5M872.5 438.9L734.8 391.2M884.0 432.9L757.7 390.0M884.0 428.0L769.6 389.6M884.0 423.3L780.3 388.8M884.0 418.6L792.4 388.4M884.0 414.0L803.2 387.7M884.0 409.5L815.2 387.3M884.0 405.1L826.3 386.7M884.0 400.8L838.1 386.3M884.0 396.6L849.3 385.7M884.0 388.3L872.4 384.8"/>
<path stroke="#4a4a4a" stroke-width="1" stroke-opacity="0.38" d="M881.0 343.7L884.0 319.9M868.2 322.0L878.1 262.6M863.8 304.0L872.8 255.9M857.1 300.7L866.9 253.5M852.0 291.3L862.6 244.3M848.8 275.3L857.6 239.7M846.0 260.3L852.3 236.9M842.9 248.6L849.6 225.3M836.7 248.6L843.9 225.3M834.9 235.1L838.7 223.6M823.6 233.3L827.8 222.1M817.7 233.3L826.5 210.8M811.8 233.3L821.0 210.8M806.6 231.6L816.2 209.5M800.8 231.6L810.7 209.5M795.7 230.0L800.8 219.1M789.9 230.0L795.2 219.1M784.8 228.3L790.3 217.6M779.0 228.3L784.7 217.6M762.3 237.3L768.4 226.8M751.2 246.0L763.5 225.3M738.8 256.4L757.8 225.3M727.2 264.6L746.5 234.0M714.1 274.8L740.6 234.0M702.1 282.7L729.1 242.5M690.0 290.3L724.2 240.8M675.9 300.2L711.1 250.7M656.3 317.2L699.1 258.7M628.5 333.7L672.9 276.0M615.4 340.2L660.4 283.4M594.7 355.9L647.7 290.6M578.6 365.2L633.0 299.9M565.1 371.1L620.0 306.7M543.6 385.9L606.9 313.4M526.6 395.0L591.3 322.5M512.7 400.4L577.9 328.8M498.7 405.6L564.5 335.0M458.3 428.0L534.5 349.7M444.0 432.7L512.1 364.0M421.0 445.8L498.2 369.5M406.4 450.1L484.1 374.8M387.5 458.5L466.7 383.2M372.8 462.6L452.4 388.2M358.0 466.7L438.1 393.2M341.7 472.0L422.6 399.1M326.1 476.4L407.6 404.3M294.2 485.5L377.0 414.8M278.0 490.1L361.3 420.0M261.5 494.7L354.9 417.5M244.7 499.4L338.9 422.8M237.3 496.5L322.7 428.2M217.1 503.8L311.5 429.4M209.4 501.1L295.0 434.7M192.0 505.9L278.3 440.0M183.9 503.6L271.1 438.0M155.4 508.2L242.8 444.3M137.2 513.3L235.2 442.7M128.6 511.4L217.6 448.1M118.0 510.9L206.5 448.9M109.2 509.2L198.5 447.5M90.2 514.6L180.4 453.1M79.7 514.0L169.4 453.7M70.4 512.7L161.0 452.6M61.0 511.5L152.4 451.6M40.8 510.1L122.4 457.9M30.9 509.3L113.4 457.2M20.5 508.8L102.5 457.7M10.4 508.2L93.2 457.2M0.0 507.7L82.3 457.6M0.0 501.0L72.8 457.3M0.0 494.5L62.0 457.7M0.0 488.2L52.3 457.5M0.0 481.9L41.6 457.8M0.0 469.9L20.9 458.1M0.0 464.1L10.6 458.2M0.0 458.5L10.5 452.6M19.6 341.2L0.0 327.1M69.6 360.2L0.0 312.2M100.0 372.8L0.0 305.2M120.7 378.4L20.1 311.8M151.7 390.6L50.6 324.8M183.0 402.4L71.2 331.1M214.6 414.0L92.0 337.2M236.1 419.0L112.9 343.3M268.1 430.1L134.1 349.2M300.3 441.0L165.7 361.1M357.8 457.6L210.5 373.1M389.4 467.0L231.5 378.1M410.4 470.4L263.1 388.7M436.7 476.4L287.6 395.1M468.6 485.3L308.9 399.6M489.9 488.3L330.2 403.9M511.2 491.2L362.1 413.7M539.0 497.3L388.1 420.0M560.6 500.1L409.7 424.0M592.9 500.2L452.8 431.5M611.2 501.2L469.3 432.7M633.0 503.9L491.1 436.4M654.8 506.5L512.9 439.9M665.7 504.0L534.8 443.4M685.1 505.4L552.5 444.8M696.1 503.0L563.5 443.3M718.2 505.6L585.6 446.6M729.3 503.2L596.7 445.1M762.5 503.4L629.9 446.8M772.1 500.6L649.0 448.7M783.3 498.5L660.2 447.2M805.7 501.0L682.6 450.4M816.9 498.9L693.8 448.9M828.1 496.9L705.0 447.5M839.2 494.9L716.2 446.1M850.4 492.9L738.5 449.1M861.3 490.9L748.0 447.0M884.0 487.3L770.7 444.4M884.0 481.3L782.0 443.2M884.0 475.5L793.3 442.0M884.0 469.8L804.7 440.7M884.0 464.2L827.3 443.7M884.0 458.7L838.7 442.5M884.0 453.3L850.0 441.3M884.0 448.0L861.3 440.1M884.0 442.9L872.5 438.9"/>
<path stroke="#4a4a4a" stroke-width="1" stroke-opacity="0.46" d="M882.7 405.6L884.0 393.3M873.5 403.4L881.0 343.7M858.4 381.4L868.2 322.0M852.6 364.2L863.8 304.0M847.4 348.0L857.1 300.7M841.3 338.3L852.0 291.3M837.1 322.7L848.8 275.3M830.4 318.6L846.0 260.3M826.1 306.9L842.9 248.6M822.3 295.2L836.7 248.6M819.8 280.9L834.9 235.1M815.3 255.8L823.6 233.3M809.0 255.8L817.7 233.3M807.2 244.6L811.8 233.3M801.9 242.7L806.6 231.6M795.8 242.7L800.8 231.6M785.5 251.7L795.7 230.0M779.2 251.7L789.9 230.0M773.9 249.8L784.8 228.3M762.0 260.5L779.0 228.3M738.3 279.5L762.3 237.3M726.7 287.5L751.2 246.0M707.1 308.2L738.8 256.4M695.0 315.7L727.2 264.6M680.8 325.9L714.1 274.8M668.4 332.9L702.1 282.7M648.9 349.7L690.0 290.3M633.7 359.6L675.9 300.2M613.5 375.7L656.3 317.2M576.6 400.9L628.5 333.7M563.0 406.4L615.4 340.2M541.7 421.2L594.7 355.9M524.3 430.5L578.6 365.2M502.5 444.7L565.1 371.1M480.4 458.5L543.6 385.9M461.9 467.6L526.6 395.0M447.5 471.9L512.7 400.4M424.7 485.0L498.7 405.6M382.2 506.4L458.3 428.0M367.3 510.1L444.0 432.7M343.8 522.1L421.0 445.8M328.7 525.5L406.4 450.1M308.3 533.8L387.5 458.5M293.1 537.0L372.8 462.6M277.9 540.1L358.0 466.7M260.8 544.8L341.7 472.0M244.5 548.5L326.1 476.4M211.5 556.2L294.2 485.5M194.6 560.1L278.0 490.1M177.4 564.2L261.5 494.7M169.4 560.6L244.7 499.4M151.8 564.9L237.3 496.5M141.6 563.2L217.1 503.8M123.7 567.5L209.4 501.1M115.2 564.6L192.0 505.9M96.8 569.2L183.9 503.6M77.7 565.0L155.4 508.2M58.8 569.7L137.2 513.3M49.4 567.6L128.6 511.4M39.3 566.0L118.0 510.9M29.8 564.1L109.2 509.2M20.0 562.4L90.2 514.6M0.0 567.6L79.7 514.0M0.0 559.4L70.4 512.7M0.0 551.5L61.0 511.5M0.0 536.1L40.8 510.1M0.0 528.8L30.9 509.3M0.0 521.6L20.5 508.8M0.0 514.6L10.4 508.2M28.7 374.0L0.0 352.0M57.9 386.8L0.0 343.3M87.5 399.3L0.0 335.0M117.6 411.7L19.6 341.2M178.8 435.5L69.6 360.2M210.0 447.1L100.0 372.8M241.4 458.4L120.7 378.4M283.2 476.0L151.7 390.6M315.2 486.7L183.0 402.4M347.4 497.1L214.6 414.0M379.8 507.3L236.1 419.0M412.5 517.3L268.1 430.1M445.3 527.0L300.3 441.0M505.1 542.0L357.8 457.6M536.7 550.1L389.4 467.0M557.8 552.0L410.4 470.4M575.1 551.9L436.7 476.4M596.4 553.9L468.6 485.3M617.7 555.8L489.9 488.3M639.0 557.7L511.2 491.2M657.6 558.1L539.0 497.3M679.2 559.9L560.6 500.1M711.5 558.2L592.9 500.2M731.2 559.1L611.2 501.2M742.1 555.8L633.0 503.9M764.0 557.7L654.8 506.5M774.9 554.5L665.7 504.0M795.6 555.8L685.1 505.4M806.6 552.7L696.1 503.0M817.7 549.7L718.2 505.6M828.8 546.8L729.3 503.2M861.9 545.9L762.5 503.4M872.8 543.1L772.1 500.6M884.0 540.4L783.3 498.5M884.0 533.2L805.7 501.0M884.0 526.2L816.9 498.9M884.0 519.3L828.1 496.9M884.0 512.6L839.2 494.9M884.0 506.1L850.4 492.9M884.0 499.7L861.3 490.9"/>
<path stroke="#4a4a4a" stroke-width="1" stroke-opacity="0.55" d="M875.0 479.0L882.7 405.6M866.1 463.0L873.5 403.4M848.5 440.7L858.4 381.4M841.4 424.3L852.6 364.2M835.2 407.0L847.4 348.0M827.9 397.1L841.3 338.3M822.4 382.0L837.1 322.7M814.8 376.9L830.4 318.6M812.7 353.6L826.1 306.9M807.9 341.9L822.3 295.2M801.0 338.2L819.8 280.9M794.6 312.1L815.3 255.8M787.1 312.1L809.0 255.8M784.2 300.9L807.2 244.6M778.1 298.0L801.9 242.7M770.9 298.0L795.8 242.7M765.0 295.2L785.5 251.7M752.5 306.1L779.2 251.7M741.1 314.0L773.9 249.8M733.6 314.0L762.0 260.5M702.2 342.6L738.3 279.5M690.0 349.7L726.7 287.5M675.4 360.0L707.1 308.2M656.4 376.9L695.0 315.7M641.0 387.1L680.8 325.9M621.1 403.2L668.4 332.9M607.9 409.0L648.9 349.7M584.4 428.8L633.7 359.6M563.6 443.9L613.5 375.7M524.7 468.1L576.6 400.9M503.0 482.2L563.0 406.4M481.1 495.8L541.7 421.2M454.5 514.5L524.3 430.5M432.0 527.5L502.5 444.7M409.2 540.1L480.4 458.5M389.1 549.2L461.9 467.6M365.9 561.4L447.5 471.9M342.5 573.2L424.7 485.0M306.1 584.7L382.2 506.4M282.1 596.0L367.3 510.1M266.6 598.4L343.8 522.1M251.0 600.8L328.7 525.5M229.1 609.2L308.3 533.8M213.4 611.4L293.1 537.0M197.7 613.6L277.9 540.1M179.8 617.7L260.8 544.8M163.0 620.6L244.5 548.5M137.9 619.0L211.5 556.2M120.4 622.4L194.6 560.1M112.1 618.2L177.4 564.2M94.1 621.9L169.4 560.6M85.4 618.0L151.8 564.9M66.1 622.7L141.6 563.2M57.1 619.2L123.7 567.5M38.4 623.3L115.2 564.6M29.0 620.2L96.8 569.2M0.0 621.8L77.7 565.0M0.0 612.1L58.8 569.7M0.0 602.7L49.4 567.6M0.0 593.6L39.3 566.0M0.0 584.7L29.8 564.1M0.0 576.0L20.0 562.4M27.8 403.2L0.0 380.3M56.3 415.7L0.0 370.4M85.3 427.9L0.0 361.0M124.4 447.4L28.7 374.0M154.4 459.2L57.9 386.8M194.6 477.9L87.5 399.3M225.4 489.1L117.6 411.7M308.0 524.6L178.8 435.5M349.9 541.7L210.0 447.1M392.2 558.4L241.4 458.4M434.9 574.6L283.2 476.0M467.7 584.0L315.2 486.7M500.6 593.1L347.4 497.1M533.8 602.0L379.8 507.3M556.9 604.4L412.5 517.3M590.3 613.0L445.3 527.0M631.4 614.4L505.1 542.0M652.5 615.3L536.7 550.1M673.5 616.2L557.8 552.0M692.3 615.8L575.1 551.9M702.9 611.0L596.4 553.9M724.2 612.1L617.7 555.8M745.5 613.1L639.0 557.7M754.6 607.8L657.6 558.1M776.2 608.9L679.2 559.9M808.5 605.8L711.5 558.2M818.5 601.3L731.2 559.1M840.3 602.5L742.1 555.8M851.3 598.6L764.0 557.7M873.1 599.9L774.9 554.5M884.0 596.1L795.6 555.8M884.0 587.5L806.6 552.7M884.0 579.2L817.7 549.7M884.0 571.0L828.8 546.8M884.0 555.3L861.9 545.9M884.0 547.8L872.8 543.1"/>
<path stroke="#4a4a4a" stroke-width="1" stroke-opacity="0.65" d="M879.8 551.4L884.0 502.2M868.6 540.2L875.0 479.0M857.1 534.5L866.1 463.0M838.6 500.1L848.5 440.7M830.2 484.4L841.4 424.3M820.5 477.9L835.2 407.0M814.6 455.9L827.9 397.1M807.8 441.2L822.4 382.0M799.2 435.2L814.8 376.9M792.6 423.5L812.7 353.6M786.4 411.9L807.9 341.9M782.2 395.5L801.0 338.2M773.8 368.4L794.6 312.1M765.1 368.4L787.1 312.1M761.1 357.2L784.2 300.9M754.3 353.4L778.1 298.0M746.0 353.4L770.9 298.0M734.3 360.6L765.0 295.2M725.8 360.6L752.5 306.1M713.8 367.5L741.1 314.0M699.5 378.2L733.6 314.0M672.2 395.3L702.2 342.6M653.2 411.9L690.0 349.7M637.4 422.2L675.4 360.0M617.7 438.1L656.4 376.9M594.4 458.5L641.0 387.1M573.9 473.6L621.1 403.2M553.1 488.2L607.9 409.0M535.1 498.1L584.4 428.8M506.5 521.9L563.6 443.9M458.0 554.5L524.7 468.1M435.6 567.3L503.0 482.2M405.4 589.1L481.1 495.8M384.7 598.4L454.5 514.5M353.6 619.5L432.0 527.5M330.1 630.8L409.2 540.1M308.3 639.9L389.1 549.2M284.3 650.8L365.9 561.4M268.5 652.6L342.5 573.2M229.9 663.1L306.1 584.7M213.9 664.7L282.1 596.0M197.9 666.3L266.6 598.4M181.9 667.8L251.0 600.8M158.7 676.2L229.1 609.2M142.6 677.5L213.4 611.4M135.4 670.7L197.7 613.6M116.9 674.3L179.8 617.7M99.6 676.7L163.0 620.6M73.6 674.0L137.9 619.0M55.6 676.9L120.4 622.4M46.7 672.2L112.1 618.2M28.2 675.4L94.1 621.9M19.0 671.2L85.4 618.0M0.0 674.8L66.1 622.7M0.0 663.5L57.1 619.2M0.0 652.6L38.4 623.3M0.0 642.0L29.0 620.2M46.2 441.5L-0.0 401.6M84.2 461.7L0.0 390.7M111.4 471.9L27.8 403.2M150.1 491.0L56.3 415.7M189.6 509.8L85.3 427.9M229.6 528.1L124.4 447.4M270.2 546.1L154.4 459.2M321.0 570.7L194.6 477.9M372.4 594.8L225.4 489.1M467.0 634.3L308.0 524.6M509.9 649.8L349.9 541.7M543.1 658.4L392.2 558.4M566.3 660.1L434.9 574.6M599.8 668.3L467.7 584.0M623.2 669.9L500.6 593.1M636.5 665.1L533.8 602.0M660.0 666.7L556.9 604.4M683.5 668.3L590.3 613.0M726.1 668.6L631.4 614.4M736.7 662.7L652.5 615.3M757.7 662.8L673.5 616.2M777.5 662.3L692.3 615.8M788.1 656.8L702.9 611.0M809.4 657.1L724.2 612.1M830.7 657.4L745.5 613.1M840.9 651.9L754.6 607.8M862.4 652.4L776.2 608.9M884.0 642.7L808.5 605.8M884.0 632.9L818.5 601.3M884.0 623.3L840.3 602.5M884.0 614.0L851.3 598.6M884.0 604.9L873.1 599.9"/>
<path stroke="#4a4a4a" stroke-width="1" stroke-opacity="0.75" d="M873.6 625.2L879.8 551.4M860.9 613.6L868.6 540.2M848.1 606.1L857.1 534.5M826.8 571.3L838.6 500.1M816.8 556.5L830.2 484.4M805.8 548.8L820.5 477.9M798.6 526.4L814.6 455.9M790.2 512.4L807.8 441.2M780.5 505.1L799.2 435.2M775.8 481.8L792.6 423.5M768.4 470.2L786.4 411.9M759.6 464.2L782.2 395.5M748.9 436.0L773.8 368.4M738.8 436.0L765.1 368.4M733.4 424.7L761.1 357.2M725.8 419.8L754.3 353.4M716.1 419.8L746.0 353.4M703.6 425.9L734.3 360.6M693.8 425.9L725.8 360.6M681.0 431.7L713.8 367.5M665.5 442.4L699.5 378.2M630.1 469.0L672.2 395.3M610.4 484.4L653.2 411.9M593.1 494.8L637.4 422.2M572.6 509.5L617.7 438.1M547.9 529.9L594.4 458.5M520.0 553.9L573.9 473.6M498.4 567.3L553.1 488.2M471.7 587.1L535.1 498.1M442.4 609.6L506.5 521.9M383.9 650.6L458.0 554.5M353.2 671.4L435.6 567.3M329.7 682.4L405.4 589.1M299.3 701.0L384.7 598.4M275.3 711.4L353.6 619.5M259.0 712.4L330.1 630.8M235.5 721.5L308.3 639.9M219.1 722.4L284.3 650.8M202.7 723.2L268.5 652.6M162.3 732.8L229.9 663.1M145.8 733.4L213.9 664.7M137.9 725.6L197.9 666.3M121.5 726.4L181.9 667.8M105.9 726.4L158.7 676.2M89.5 727.1L142.6 677.5M73.0 727.9L135.4 670.7M53.9 731.0L116.9 674.3M45.3 724.8L99.6 676.7M18.4 721.2L73.6 674.0M0.0 723.6L55.6 676.9M0.0 710.8L46.7 672.2M0.0 698.4L28.2 675.4M0.0 686.4L19.0 671.2M17.4 467.8L-0.0 451.1M44.2 479.1L-0.0 437.8M71.9 490.5L-0.0 425.1M138.7 521.4L46.2 441.5M177.8 540.5L84.2 461.7M213.5 555.9L111.4 471.9M262.7 581.5L150.1 491.0M322.3 613.9L189.6 509.8M373.1 638.2L229.6 528.1M434.2 669.1L270.2 546.1M486.4 692.2L321.0 570.7M529.3 707.5L372.4 594.8M596.2 723.3L467.0 634.3M619.9 724.2L509.9 649.8M643.6 725.0L543.1 658.4M667.5 725.8L566.3 660.1M681.1 720.2L599.8 668.3M705.0 721.0L623.2 669.9M728.9 721.9L636.5 665.1M742.5 716.5L660.0 666.7M766.4 717.4L683.5 668.3M799.8 710.9L726.1 668.6M820.9 710.2L736.7 662.7M831.4 703.7L757.7 662.8M852.0 702.9L777.5 662.3M873.3 702.5L788.1 656.8M884.0 696.5L809.4 657.1M884.0 685.1L830.7 657.4M884.0 674.0L840.9 651.9M884.0 663.3L862.4 652.4"/>
<path stroke="#4a4a4a" stroke-width="1" stroke-opacity="0.87" d="M881.5 719.5L884.0 680.3M866.3 711.2L873.6 625.2M851.9 699.3L860.9 613.6M837.6 689.6L848.1 606.1M813.0 654.4L826.8 571.3M801.1 640.7L816.8 556.5M788.8 631.4L805.8 548.8M779.9 608.7L798.6 526.4M769.6 595.3L790.2 512.4M758.7 586.8L780.5 505.1M752.3 563.4L775.8 481.8M743.2 551.8L768.4 470.2M737.1 533.0L759.6 464.2M719.8 514.8L748.9 436.0M712.6 503.5L738.8 436.0M701.2 503.5L733.4 424.7M692.5 497.2L725.8 419.8M681.3 497.2L716.1 419.8M667.8 502.0L703.6 425.9M656.5 502.0L693.8 425.9M642.8 506.7L681.0 431.7M625.7 517.4L665.5 442.4M588.0 542.8L630.1 469.0M561.3 567.3L610.4 484.4M542.4 577.7L593.1 494.8M514.7 601.3L572.6 509.5M488.1 621.8L547.9 529.9M452.5 654.4L520.0 553.9M423.1 676.2L498.4 567.3M387.3 705.8L471.7 587.1M356.8 726.5L442.4 609.6M295.0 765.8L383.9 650.6M270.8 775.5L353.2 671.4M253.9 775.7L329.7 682.4M229.5 785.0L299.3 701.0M212.6 785.0L275.3 711.4M195.7 785.0L259.0 712.4M178.9 785.0L235.5 721.5M162.0 785.0L219.1 722.4M145.2 785.0L202.7 723.2M111.5 785.0L162.3 732.8M94.7 785.0L145.8 733.4M77.9 785.0L137.9 725.6M61.1 785.0L121.5 726.4M44.3 785.0L105.9 726.4M27.5 785.0L89.5 727.1M19.6 776.8L73.0 727.9M0.0 779.5L53.9 731.0M0.0 764.8L45.3 724.8M0.0 736.9L18.4 721.2M16.7 513.7L0.0 496.1M42.8 523.8L0.0 480.3M61.2 525.8L0.0 465.3M95.6 543.0L17.4 467.8M123.8 553.5L44.2 479.1M161.8 572.3L71.9 490.5M249.6 617.3L138.7 521.4M299.4 643.1L177.8 540.5M371.3 685.7L213.5 555.9M450.4 732.2L262.7 581.5M511.8 762.7L322.3 613.9M545.3 770.3L373.1 638.2M579.0 777.8L434.2 669.1M603.1 777.9L486.4 692.2M627.3 778.0L529.3 707.5M675.6 778.1L596.2 723.3M699.9 778.2L619.9 724.2M714.0 771.7L643.6 725.0M738.3 771.9L667.5 725.8M762.5 772.0L681.1 720.2M776.5 765.8L705.0 721.0M800.7 766.1L728.9 721.9M814.7 760.1L742.5 716.5M838.9 760.4L766.4 717.4M873.5 753.1L799.8 710.9M884.0 745.8L820.9 710.2M884.0 732.8L831.4 703.7M884.0 720.3L852.0 702.9M884.0 708.2L873.3 702.5"/>
<path stroke="#4a4a4a" stroke-width="1" stroke-opacity="1.0" d="M877.3 785.0L881.5 719.5M860.1 785.0L866.3 711.2M842.9 785.0L851.9 699.3M825.7 785.0L837.6 689.6M791.3 785.0L813.0 654.4M774.2 785.0L801.1 640.7M757.0 785.0L788.8 631.4M739.9 785.0L779.9 608.7M722.7 785.0L769.6 595.3M705.6 785.0L758.7 586.8M688.5 785.0L752.3 563.4M671.4 785.0L743.2 551.8M654.3 785.0L737.1 533.0M620.1 785.0L719.8 514.8M603.0 785.0L712.6 503.5M585.9 785.0L701.2 503.5M568.9 785.0L692.5 497.2M551.8 785.0L681.3 497.2M534.8 785.0L667.8 502.0M517.7 785.0L656.5 502.0M500.7 785.0L642.8 506.7M483.7 785.0L625.7 517.4M449.7 785.0L588.0 542.8M432.7 785.0L561.3 567.3M415.7 785.0L542.4 577.7M398.8 785.0L514.7 601.3M381.8 785.0L488.1 621.8M364.8 785.0L452.5 654.4M347.9 785.0L423.1 676.2M330.9 785.0L387.3 705.8M314.0 785.0L356.8 726.5M280.2 785.0L295.0 765.8M263.3 785.0L270.8 775.5M246.4 785.0L253.9 775.7M10.7 785.0L19.6 776.8M12.7 785.0L0.0 765.0M36.5 785.0L0.0 730.0M60.3 785.0L0.0 698.0M84.2 785.0L0.0 668.4M108.0 785.0L0.0 641.2M131.9 785.0L0.0 615.9M155.8 785.0L0.0 592.4M203.6 785.0L0.0 550.1M227.5 785.0L0.0 530.9M251.5 785.0L0.0 513.0M275.5 785.0L16.7 513.7M299.4 785.0L42.8 523.8M323.4 785.0L61.2 525.8M347.5 785.0L95.6 543.0M371.5 785.0L123.8 553.5M395.6 785.0L161.8 572.3M443.7 785.0L249.6 617.3M467.8 785.0L299.4 643.1M492.0 785.0L371.3 685.7M516.1 785.0L450.4 732.2M540.3 785.0L511.8 762.7M564.4 785.0L545.3 770.3M588.6 785.0L579.0 777.8M612.8 785.0L603.1 777.9M637.1 785.0L627.3 778.0M685.6 785.0L675.6 778.1M709.9 785.0L699.9 778.2M734.2 785.0L714.0 771.7M758.5 785.0L738.3 771.9M782.8 785.0L762.5 772.0M807.2 785.0L776.5 765.8M831.5 785.0L800.7 766.1M855.9 785.0L814.7 760.1M880.3 785.0L838.9 760.4M884.0 759.1L873.5 753.1"/></g>
<g transform="translate(-258,-96)">
<defs>
<linearGradient id="gwing" x1="0" y1="0" x2="0" y2="1"><stop offset="0" stop-color="#cc95dc"/><stop offset="1" stop-color="#c283d5"/></linearGradient>
<linearGradient id="gwing2" x1="0" y1="0" x2="0.3" y2="1"><stop offset="0" stop-color="#c990da"/><stop offset="0.9" stop-color="#c586d8"/><stop offset="1" stop-color="#b578c8"/></linearGradient>
<linearGradient id="gwhite" x1="0" y1="0" x2="0.4" y2="1"><stop offset="0" stop-color="#dedede"/><stop offset="0.9" stop-color="#d6d6d6"/><stop offset="1" stop-color="#c4c4c4"/></linearGradient>
<radialGradient id="gfus" gradientUnits="userSpaceOnUse" cx="685" cy="446" r="140"><stop offset="0" stop-color="#7282e0"/><stop offset="0.6" stop-color="#6a7bde"/><stop offset="1" stop-color="#5a69d4"/></radialGradient>
<radialGradient id="gnose" cx="0.35" cy="0.45" r="0.7"><stop offset="0" stop-color="#d8a4e6"/><stop offset="0.7" stop-color="#c88cda"/><stop offset="1" stop-color="#b97bd0"/></radialGradient>
<radialGradient id="ghub" cx="0.45" cy="0.4" r="0.65"><stop offset="0" stop-color="#eeae62"/><stop offset="1" stop-color="#d8924c"/></radialGradient>
<filter id="blur2" x="-20%" y="-20%" width="140%" height="140%"><feGaussianBlur stdDeviation="1.8"/></filter>
<filter id="blur3" x="-30%" y="-30%" width="160%" height="160%"><feGaussianBlur stdDeviation="5"/></filter>
<linearGradient id="gfin" x1="0" y1="0" x2="1" y2="0"><stop offset="0" stop-color="#5f70d8"/><stop offset="0.6" stop-color="#7282e2"/><stop offset="1" stop-color="#6476dc"/></linearGradient>
</defs>
<path fill="url(#gwhite)" d="M612 391 C600 385 585 381 570 381 C548 382 522 393 512 402 C505 410 508 418 515 422 C520 425 526 428 532 429 L560 430 Z"/>
<path fill="url(#gwing)" d="M530.9 427.6 C539 413 563 394 600.6 389.2 L606.5 389 L651.3 403.5 L665 425 L600 470 L582 451.7 Z"/>
<path d="M533 429 L582 452" stroke="#b274c6" stroke-width="2.2" fill="none" opacity="0.7"/>
<path fill="url(#gwing)" d="M794.0 387.0C801.4 387.0 841.3 401.5 849.8 404.2C858.3 406.9 856.5 406.4 858.0 407.5C859.5 408.6 861.1 411.0 861.0 412.3C860.9 413.6 859.5 416.5 857.5 417.5C855.5 418.5 854.5 421.7 846.0 420.0C837.5 418.3 800.9 408.9 794.0 404.5C787.1 400.1 786.6 387.0 794.0 387.0Z"/>
<path fill="url(#gfin)" d="M752 364 C758 360 762 352 768 340 C773 328 777 315 781 307 C783 303 786 302 788.5 302 C791.5 302 791.5 310 791 318 C790.5 330 790 345 791 356 C791.5 361 793 364 794 366 L775 372 Z"/>
<path fill="url(#gfus)" d="M569.3 476.5C571.5 469.0 575.4 459.5 581.5 452.0C587.6 444.5 596.8 438.1 606.0 431.7C615.2 425.2 626.7 418.8 636.5 413.3C646.3 407.9 654.4 404.6 665.0 399.0C675.6 393.4 686.0 386.5 700.0 380.0C714.0 373.5 737.3 363.9 749.0 360.0C760.7 356.1 763.1 356.3 770.0 356.5C776.9 356.7 785.5 358.9 790.2 361.0C794.9 363.1 796.5 365.6 798.4 369.2C800.3 372.8 801.7 377.7 801.7 382.4C801.7 387.1 800.0 391.8 798.4 397.3C796.8 402.8 794.8 409.1 791.8 415.4C788.8 421.7 786.4 426.4 780.3 435.2C774.2 444.0 764.2 457.2 755.0 468.0C745.8 478.8 734.6 488.4 725.0 500.0C715.4 511.6 706.9 527.3 697.6 537.6C688.3 547.9 678.2 556.6 669.0 562.0C659.8 567.4 651.4 569.9 642.6 570.2C633.8 570.5 624.9 568.2 616.1 564.0C607.3 559.8 597.5 552.8 590.0 545.0C582.5 537.2 574.9 525.2 571.3 517.2C567.7 509.2 568.5 503.6 568.2 496.8C567.9 490.0 567.1 484.0 569.3 476.5Z"/>
<clipPath id="cfus"><path d="M569.3 476.5C571.5 469.0 575.4 459.5 581.5 452.0C587.6 444.5 596.8 438.1 606.0 431.7C615.2 425.2 626.7 418.8 636.5 413.3C646.3 407.9 654.4 404.6 665.0 399.0C675.6 393.4 686.0 386.5 700.0 380.0C714.0 373.5 737.3 363.9 749.0 360.0C760.7 356.1 763.1 356.3 770.0 356.5C776.9 356.7 785.5 358.9 790.2 361.0C794.9 363.1 796.5 365.6 798.4 369.2C800.3 372.8 801.7 377.7 801.7 382.4C801.7 387.1 800.0 391.8 798.4 397.3C796.8 402.8 794.8 409.1 791.8 415.4C788.8 421.7 786.4 426.4 780.3 435.2C774.2 444.0 764.2 457.2 755.0 468.0C745.8 478.8 734.6 488.4 725.0 500.0C715.4 511.6 706.9 527.3 697.6 537.6C688.3 547.9 678.2 556.6 669.0 562.0C659.8 567.4 651.4 569.9 642.6 570.2C633.8 570.5 624.9 568.2 616.1 564.0C607.3 559.8 597.5 552.8 590.0 545.0C582.5 537.2 574.9 525.2 571.3 517.2C567.7 509.2 568.5 503.6 568.2 496.8C567.9 490.0 567.1 484.0 569.3 476.5Z"/></clipPath>
<path fill="url(#gfus)" d="M640.0 414.0C640.3 411.8 650.3 404.1 652.8 402.5C655.3 400.9 662.0 398.4 664.9 398.3C667.8 398.2 677.7 400.6 681.6 402.0C685.5 403.4 699.0 408.8 703.5 411.9C708.0 415.0 727.4 429.5 727.0 432.8C726.6 436.1 707.7 445.8 700.0 445.0C692.3 444.2 656.0 428.1 650.0 425.0C644.0 421.9 639.7 416.2 640.0 414.0Z"/>
<path d="M575 478 C590 468 610 468 625 476 C640 486 652 505 654 530 C655 545 651 556 644 562" stroke="#5362cc" stroke-width="5" fill="none" opacity="0.55" filter="url(#blur2)"/>
<g clip-path="url(#cfus)"><path d="M569 474 C575 458 590 446 606 436" stroke="#8494ec" stroke-width="6" fill="none" opacity="0.55" filter="url(#blur2)"/><path d="M640 410 C690 385 740 365 790 362" stroke="#7e8ee8" stroke-width="6" fill="none" opacity="0.35" filter="url(#blur2)"/><path d="M806 380 C800 420 770 455 735 495 C705 530 690 560 640 575" stroke="#5060c8" stroke-width="9" fill="none" opacity="0.45" filter="url(#blur3)"/><ellipse cx="660" cy="450" rx="40" ry="22" transform="rotate(-32 660 450)" fill="#7888e4" opacity="0.5" filter="url(#blur3)"/></g>
<path fill="url(#gnose)" d="M590.8 478.5C594.6 476.4 598.0 475.7 603.1 477.0C608.2 478.3 616.0 481.6 621.6 486.2C627.2 490.8 633.3 498.0 637.0 504.7C640.7 511.4 643.0 520.1 644.0 526.3C645.0 532.5 644.6 537.3 643.2 541.7C641.8 546.1 639.1 550.3 635.5 552.5C631.9 554.7 626.5 555.0 621.6 554.8C616.7 554.5 611.9 553.7 606.2 551.0C600.6 548.3 592.8 543.8 587.7 538.6C582.6 533.5 577.6 525.8 575.4 520.1C573.2 514.5 573.8 509.8 574.6 504.7C575.4 499.6 577.3 493.7 580.0 489.3C582.7 484.9 586.9 480.6 590.8 478.5Z"/>
<path fill="#c68ad8" d="M652.8 402.5L681.6 358.6L698.3 359.6L707.7 358.6L714.0 352.8L722.3 352.3L734.9 354.4L752.6 363.8L763.1 399.3L727.0 432.8L703.5 411.9L681.6 401.9L664.9 398.3Z"/>
<path fill="#b679ce" d="M707.7 358.6L714.0 352.8L734.9 354.4L752.6 363.8L723.4 373.2Z"/>
<path fill="#c184d5" d="M688.9 361.7L721.3 376.3L724.4 430.7L703.5 411.9L681.6 401.9L665.9 398.8Z"/>
<path fill="#d29ce1" d="M652.8 402.5L681.6 358.6L688.9 361.7L665.9 398.8Z"/>
<path fill="#cb92dc" d="M681.6 358.6L698.3 359.6L723.4 373.2L721.3 376.3L688.9 361.7Z"/>
<path fill="#cc94dd" d="M694.1 365.9L699.9 367.5L703.0 411.0L697.2 408.2Z"/>
<path fill="#b677cd" d="M723.4 373.2L749.5 365.9L758.9 398.3L727.5 401.4Z"/>
<path fill="#cc91dd" d="M749.5 365.9L752.6 363.8L763.1 399.3L758.9 398.3Z"/>
<path fill="#c892da" d="M727.5 401.4L758.9 398.3L763.1 399.3L727.0 432.8Z"/>
<path fill="#d39ee2" d="M721.3 373.2L725.5 373.7L728.6 431.7L726.0 432.3Z"/>
<path fill="#c98edb" d="M707.7 358.6L714.0 352.8L734.9 354.4L752.6 363.8L749.5 366.4L733.8 357.3L716.1 356.0L710.8 360.2Z"/>
<path fill="url(#gwing2)" d="M760.2 449 L858 486.5 L803 560 L713 516.8 C705 513 700.5 509 701.5 504 C703 497 712 485 724 474 C740 459 752 450 760.2 449 Z"/>
<path fill="url(#gwhite)" d="M854.6 486.5 C872 493 890 503 900.7 515.6 C907 523 910 533 908 547 C905 560 895 570 878 575 C862 578 845 575 830 570 L800.2 558 Z"/>
<path d="M702 507 L800.2 558" stroke="#b174c6" stroke-width="2" fill="none" opacity="0.6"/>
<path fill="#e000e0" d="M500.6 471.2C502.6 470.9 503.9 472.3 507.6 474.7C511.3 477.1 519.9 482.9 525.2 487.0C530.5 491.1 537.5 497.8 542.8 502.0C548.1 506.2 554.8 510.8 560.4 515.1C566.0 519.5 573.5 526.2 580.0 531.0C586.5 535.8 597.3 542.9 603.8 547.1C610.3 551.3 617.7 555.4 623.6 559.0C629.5 562.6 637.5 566.7 643.4 570.9C649.3 575.1 657.9 582.2 663.2 586.7C668.5 591.2 675.7 597.1 679.0 600.6C682.3 604.1 684.4 607.5 685.5 610.0C686.6 612.5 687.5 615.8 686.5 617.5C685.5 619.2 682.5 622.1 679.0 621.4C675.5 620.6 669.1 616.5 663.2 612.5C657.3 608.5 646.9 600.3 639.5 594.7C632.1 589.1 620.7 580.3 613.7 574.9C606.7 569.5 599.6 564.1 592.9 559.0C586.2 553.9 574.7 544.7 569.2 540.6C563.7 536.5 560.6 534.7 556.0 531.8C551.4 528.9 543.7 524.7 538.4 521.3C533.1 517.9 525.7 512.7 520.8 509.0C515.9 505.3 509.5 500.4 505.8 496.7C502.1 493.0 497.9 487.3 496.2 484.3C494.5 481.3 493.8 478.5 494.5 476.5C495.2 474.5 498.6 471.5 500.6 471.2Z"/>
<path d="M503 481 C515 492 530 505 548 517 L572 534" stroke="#b800b8" stroke-width="4" fill="none" stroke-linecap="round"/>
<path d="M612 563 C630 576 650 590 670 606" stroke="#b800b8" stroke-width="4.5" fill="none" stroke-linecap="round"/>
<ellipse cx="583.5" cy="540.5" rx="22" ry="21" fill="url(#ghub)"/>
<path d="M566 531 C575 536 590 545 600 552" stroke="#c98540" stroke-width="1" fill="none" opacity="0.5"/>
<path fill="none" stroke="#d9a404" stroke-width="2.4" d="M500.6 471.2C502.6 470.9 503.9 472.3 507.6 474.7C511.3 477.1 519.9 482.9 525.2 487.0C530.5 491.1 537.5 497.8 542.8 502.0C548.1 506.2 554.8 510.8 560.4 515.1C566.0 519.5 573.5 526.2 580.0 531.0C586.5 535.8 597.3 542.9 603.8 547.1C610.3 551.3 617.7 555.4 623.6 559.0C629.5 562.6 637.5 566.7 643.4 570.9C649.3 575.1 657.9 582.2 663.2 586.7C668.5 591.2 675.7 597.1 679.0 600.6C682.3 604.1 684.4 607.5 685.5 610.0C686.6 612.5 687.5 615.8 686.5 617.5C685.5 619.2 682.5 622.1 679.0 621.4C675.5 620.6 669.1 616.5 663.2 612.5C657.3 608.5 646.9 600.3 639.5 594.7C632.1 589.1 620.7 580.3 613.7 574.9C606.7 569.5 599.6 564.1 592.9 559.0C586.2 553.9 574.7 544.7 569.2 540.6C563.7 536.5 560.6 534.7 556.0 531.8C551.4 528.9 543.7 524.7 538.4 521.3C533.1 517.9 525.7 512.7 520.8 509.0C515.9 505.3 509.5 500.4 505.8 496.7C502.1 493.0 497.9 487.3 496.2 484.3C494.5 481.3 493.8 478.5 494.5 476.5C495.2 474.5 498.6 471.5 500.6 471.2Z"/>
<ellipse cx="718.1" cy="584.4" rx="46.8" ry="36.6" fill="none" stroke="#a8a8a8" stroke-width="4.4"/>
<ellipse cx="718.1" cy="584.4" rx="46.8" ry="36.6" fill="none" stroke="#2a86dc" stroke-width="2.6"/>
<path d="M715.2 546.5 C714.6 543.5 716.8 540.8 719.3 539.6 C721.8 540.8 724 543.5 723.4 546.5 C722 548 716.6 548 715.2 546.5Z" fill="#2a86dc" stroke="#a8a8a8" stroke-width="0.8"/>
<path d="M767.5 596.5L775.5 600.8L768.5 603.2Z" fill="#dd2f4a" stroke="#9a9a9a" stroke-width="0.6"/>
<path d="M691.5 620L699.5 624.5L692 628.5Z" fill="#2cc468" stroke="#9a9a9a" stroke-width="0.6"/>
</g>
</svg>

</div>
<div id="right" class="a"></div>
<svg class="a" style="left:1150px;top:104.5px" width="13" height="14"><use href="#i-mesh" width="13" height="14"/></svg>
<div class="t" style="left:1169px;top:105px;font-size:13.4px;font-weight:bold;color:#ececec;-webkit-text-stroke:0.1px #ececec"><span class="us" style="width:69px;border-bottom-width:2px"></span>004</div>
<div class="a" style="left:1380px;top:110px;width:2.2px;height:2.2px;border-radius:2px;background:#ddd;box-shadow:4.3px 0 0 #ddd,8.6px 0 0 #ddd"></div>
<svg class="a" style="left:1151px;top:127px" width="10" height="11"><path d="M0.5 0.5L9.5 5.5L0.5 10.5Z" fill="#4c4c4c"/></svg>
<div class="a" style="left:1170px;top:128.5px;width:8px;height:8px;background:#4c4c4c;border-radius:1px"></div>
<div class="a" style="left:1190px;top:132px;width:10px;height:1.3px;background:#4a4a4a"></div>
<div class="a" style="left:1202px;top:131px;width:1px;height:1px;background:#4a4a4a;box-shadow:0 2px 0 #4a4a4a"></div>
<div class="a" style="left:1205px;top:132px;width:12px;height:1.3px;background:#4a4a4a"></div>
<div class="a" style="left:1365px;top:132px;width:10px;height:1.3px;background:#4a4a4a"></div>
<div class="a" style="left:1377px;top:131px;width:1px;height:1px;background:#4a4a4a;box-shadow:0 2px 0 #4a4a4a"></div>
<div class="a" style="left:1380px;top:132px;width:12px;height:1.3px;background:#4a4a4a"></div>
<div class="a" style="left:1229px;top:130.5px;width:129px;height:4px;border-radius:2px;background:#3c3c3c"></div>
<div class="a" style="left:1150px;top:150px;width:243px;height:102px;background:#303030;border-radius:7px"></div>
<svg class="a" style="left:1154px;top:158.5px" width="9" height="6"><path d="M0.7 0.7L4.5 4.6L8.3 0.7" stroke="#8c8c8c" stroke-width="1.1" fill="none"/></svg>
<div class="t hdr" style="left:1167px;top:156px">Transform</div>
<svg class="a" style="left:1343px;top:155px" width="12" height="12"><g fill="none" stroke="#9a9a9a" stroke-width="0.9"><path d="M1 8.5L5 6.5L3.5 11Z"/><path d="M5 6.5L10.8 1.2M8 1.2H10.8V4"/><path d="M6.5 8.5L10.8 11M8.5 11H10.8V8.3"/></g></svg>
<div class="t" style="left:1360px;top:156px;font-size:10px;color:#c8c8c8">Local</div>
<div class="t lbl" style="left:1167px;top:177.5px;font-size:10.5px">Position</div>
<div class="t lbl" style="left:1167px;top:199.5px;font-size:10.5px">Rotation</div>
<div class="t lbl" style="left:1167px;top:222.0px;font-size:10.5px">Scale</div>
<div class="t" style="left:1252px;top:178px;font-size:10px;font-weight:bold;color:#bdbdbd;-webkit-text-stroke:0">cm</div>
<div class="a" style="left:1262.5px;top:202.5px;width:4px;height:4px;border:1.2px solid #c8c8c8;border-radius:50%"></div>
<svg class="a" style="left:1254px;top:222px" width="11" height="11"><g fill="none" stroke="#a8a8a8" stroke-width="1"><path d="M3.2 5.2L1.5 6.9A2 2 0 0 0 4.3 9.7L6 8"/><path d="M5.2 3.2L6.9 1.5A2 2 0 0 1 9.7 4.3L8 6"/><path d="M1 1L10 10"/></g></svg>
<div class="fld" style="left:1273px;top:174px;width:32px">0</div>
<div class="fld" style="left:1308.5px;top:174px;width:32px">0</div>
<div class="fld" style="left:1344px;top:174px;width:32px">0</div>
<div class="fld" style="left:1273px;top:196px;width:32px">0</div>
<div class="fld" style="left:1308.5px;top:196px;width:32px">0</div>
<div class="fld" style="left:1344px;top:196px;width:32px">0</div>
<div class="fld" style="left:1273px;top:218px;width:32px">1</div>
<div class="fld" style="left:1308.5px;top:218px;width:32px">1</div>
<div class="fld" style="left:1344px;top:218px;width:32px">1</div>
<div class="t" style="left:1286px;top:237.7px;font-size:7px;color:#7a7a7a">X</div>
<div class="t" style="left:1321.5px;top:237.7px;font-size:7px;color:#7a7a7a">Y</div>
<div class="t" style="left:1357px;top:237.7px;font-size:7px;color:#7a7a7a">Z</div>
<div class="a" style="left:1150px;top:259px;width:243px;height:101px;background:#303030;border-radius:7px"></div>
<svg class="a" style="left:1154px;top:267.5px" width="9" height="6"><path d="M0.7 0.7L4.5 4.6L8.3 0.7" stroke="#8c8c8c" stroke-width="1.1" fill="none"/></svg>
<div class="t hdr" style="left:1167px;top:265px">References</div>
<div class="a" style="left:1167px;top:283px;width:208px;height:72px;background:#363636;border-radius:6px"></div>
<div class="a" style="left:1167px;top:333px;width:208px;height:1px;background:#4e4e4e"></div>
<div class="a" style="left:1177px;top:344.5px;width:10px;height:1.2px;background:#c8c8c8"></div>
<div class="a" style="left:1181.4px;top:340px;width:1.2px;height:10px;background:#c8c8c8"></div>
<div class="a" style="left:1198px;top:344.5px;width:10px;height:1.2px;background:#8a8a8a"></div>
<div class="a" style="left:1150px;top:368px;width:243px;height:48px;background:#303030;border-radius:7px"></div>
<svg class="a" style="left:1154px;top:376.5px" width="9" height="6"><path d="M0.7 0.7L4.5 4.6L8.3 0.7" stroke="#8c8c8c" stroke-width="1.1" fill="none"/></svg>
<div class="t hdr" style="left:1167px;top:374px">Material Bindings</div>
<div class="t lbl" style="left:1167px;top:396px;font-size:10.5px">Binding</div>
<div class="a" style="left:1150px;top:424.5px;width:243px;height:69px;background:#303030;border-radius:7px"></div>
<svg class="a" style="left:1154px;top:433px" width="9" height="6"><path d="M0.7 0.7L4.5 4.6L8.3 0.7" stroke="#8c8c8c" stroke-width="1.1" fill="none"/></svg>
<div class="t hdr" style="left:1167px;top:429.5px">Mesh</div>
<div class="a" style="left:1167px;top:451px;width:13px;height:13px;border-radius:3px;background:linear-gradient(#5e5e5e,#4c4c4c)"></div>
<div class="t lbl" style="left:1186px;top:451.5px;font-size:10.5px">Reorder Verte:</div>
<div class="t lbl" style="left:1167px;top:473.5px;font-size:10.5px">Subdivision Scher</div>
<div class="a" style="left:1255px;top:387.5px;width:139px;height:120px;background:#2b2b2b;border-radius:6px;border:1px solid #4a4a4a;box-shadow:0 4px 12px rgba(0,0,0,0.4)"></div>
<div class="t" style="left:1265px;top:396px;font-size:11px;color:#e6e6e6">✓</div>
<div class="t" style="left:1276px;top:396px;font-size:11px;color:#e6e6e6">None</div>
<div class="a" style="left:1268px;top:416.5px;width:113px;height:1px;background:#444"></div>
<div class="a" style="left:1259px;top:483px;width:131px;height:21px;background:#d0620f;border-radius:5px"></div>
<div class="t" style="left:1276px;top:426.8px;font-size:11px;color:#ececec">_materials/blue</div>
<div class="t" style="left:1276px;top:447.2px;font-size:11px;color:#ececec">_materials/orange</div>
<div class="t" style="left:1276px;top:467.8px;font-size:11px;color:#ececec">_materials/purple</div>
<div class="t" style="left:1276px;top:487.5px;font-size:11px;color:#ececec">_materials/white3333</div>
<div class="a" style="left:1150px;top:856px;width:242px;height:19px;background:#353535;border-radius:6px"></div>
<div class="t" style="left:1150px;top:859.5px;width:242px;text-align:center;font-size:11px;color:#e6e6e6">Add Component</div>
<div id="bottom" class="a"></div>
<div class="a" style="left:11.5px;top:865.3px;width:10px;height:1.1px;background:#d4d4d4"></div>
<div class="a" style="left:16px;top:860.8px;width:1.1px;height:10px;background:#d4d4d4"></div>
<div class="a" style="left:30px;top:856px;width:220px;height:19px;border-radius:7px;background:#313131"></div>
<svg class="a" style="left:36.5px;top:859.5px" width="12" height="12"><circle cx="6" cy="6" r="5.3" fill="none" stroke="#d0d0d0" stroke-width="1"/><path d="M3.2 4.4H8.8L8 6H4Z" fill="#8a8a8a"/><path d="M4.6 7.6H7.4" stroke="#d0d0d0" stroke-width="0.9"/></svg>
<svg class="a" style="left:51.5px;top:863.5px" width="7" height="5"><path d="M0.8 0.8L3.5 3.6L6.2 0.8" stroke="#d0d0d0" stroke-width="1.3" fill="none"/></svg>
<div class="t" style="left:64.5px;top:860px;font-size:11px;color:#6a6a6a">Filter</div>
<div class="a" style="left:266px;top:856.3px;width:121px;height:18.5px;border-radius:6px;background:#2b2b2b"></div>
<div class="a" style="left:402px;top:856.3px;width:23.5px;height:18.5px;border-radius:6px;background:#2b2b2b"></div>
<div class="a" style="left:440.5px;top:856.3px;width:25px;height:18.5px;border-radius:6px;background:#2b2b2b"></div>
<svg class="a" style="left:270.5px;top:858.5px" width="15" height="15"><path d="M11.6 8.6A5.4 5.4 0 1 0 5.2 11.4" fill="none" stroke="#f0a800" stroke-width="1.3"/><path d="M7.8 5.6L13 9.6L10.6 10L12 12.8L10.9 13.4L9.5 10.6L7.9 12.6Z" fill="#f0a800"/></svg>
<svg class="a" style="left:294.5px;top:858.5px" width="13" height="13"><circle cx="6.5" cy="6.5" r="5.6" fill="none" stroke="#c4c4c4" stroke-width="1"/><circle cx="6.5" cy="6.5" r="2.4" fill="#c4c4c4"/><path d="M1.5 6.5H11.5M6.5 1.5V11.5" stroke="#c4c4c4" stroke-width="0.9"/></svg>
<svg class="a" style="left:319.5px;top:858px" width="14" height="14"><path d="M7 1V13M1 7H13" stroke="#c4c4c4" stroke-width="1.1"/><path d="M7 0.3L9 2.6H5ZM7 13.7L9 11.4H5ZM0.3 7L2.6 5V9ZM13.7 7L11.4 5V9Z" fill="#c4c4c4"/></svg>
<svg class="a" style="left:344.5px;top:858.5px" width="13" height="13"><circle cx="6.5" cy="6.5" r="5.6" fill="none" stroke="#c4c4c4" stroke-width="1"/><path d="M6.5 1V7M1 7H12" stroke="#c4c4c4" stroke-width="1"/></svg>
<svg class="a" style="left:369.5px;top:858.5px" width="14" height="14"><circle cx="5.6" cy="5.6" r="4.6" fill="none" stroke="#c4c4c4" stroke-width="1"/><path d="M9 9L12.8 12.8" stroke="#c4c4c4" stroke-width="1.2"/><path d="M4 4.6L5.2 3.6M6 7.6L7.2 6.6" stroke="#c4c4c4" stroke-width="1"/></svg>
<svg class="a" style="left:406px;top:859.5px" width="16" height="11"><rect x="0.6" y="0.6" width="10.6" height="9.6" rx="1.5" fill="none" stroke="#c4c4c4" stroke-width="1"/><path d="M11.2 4L15.2 1.5V9.5L11.2 7" fill="none" stroke="#c4c4c4" stroke-width="1"/><path d="M3.8 4.2A2.6 2.6 0 1 1 4.2 7.4" fill="none" stroke="#c4c4c4" stroke-width="0.9"/><path d="M2.8 2.8L3.8 4.6L5.4 3.6" fill="none" stroke="#c4c4c4" stroke-width="0.9"/></svg>
<svg class="a" style="left:444.5px;top:860px" width="17" height="10"><path d="M0.6 9.4L4.6 3.6L6.6 6.2L10.4 0.8L16.4 9.4Z" fill="none" stroke="#c4c4c4" stroke-width="1" stroke-linejoin="round"/><path d="M3.6 5L5 6.4L6.2 5.4M9 2.8L10.4 4.4L11.8 2.8" fill="none" stroke="#c4c4c4" stroke-width="0.8"/></svg>
<svg class="a" style="left:8.5px;top:889.5px" width="16" height="13"><rect x="0.6" y="0.6" width="10.4" height="8" rx="1.5" fill="none" stroke="#a8a8a8" stroke-width="1"/><rect x="3.6" y="3.6" width="11.6" height="8.8" rx="1.5" fill="#1c1c1c" stroke="#a8a8a8" stroke-width="1"/></svg>
<svg class="a" style="left:33.5px;top:890.5px" width="15" height="12"><rect x="0.6" y="0.6" width="13.6" height="10.6" rx="1.8" fill="none" stroke="#a8a8a8" stroke-width="1"/><rect x="2.2" y="2.2" width="1.8" height="7.4" fill="#a8a8a8"/></svg>
<div class="a" style="left:438px;top:886.8px;width:115.5px;height:18px;border-radius:6px;background:#2e2e2e"></div>
<svg class="a" style="left:446px;top:891px" width="13" height="11"><g fill="none" stroke="#d8d8d8" stroke-width="1"><path d="M0.6 1.2H4.8L6 2.6H12.2V10.2H0.6Z"/><path d="M0.6 3.8H12.2"/></g></svg>
<div class="t" style="left:463.5px;top:891px;font-size:11.4px;color:#e4e4e4;-webkit-text-stroke:0.5px #e4e4e4">Project Browser</div>
<svg class="a" style="left:572.5px;top:891.5px" width="12" height="10"><g fill="none" stroke="#a8a8a8" stroke-width="1"><rect x="0.5" y="3.2" width="3.4" height="3.4"/><path d="M3.9 4.9H6.5M6.5 2V8M6.5 2H8.2M6.5 8H8.2"/><rect x="7.8" y="0.5" width="3.6" height="9" rx="1.8"/></g></svg>
<div class="t" style="left:588.5px;top:891px;font-size:11.5px;color:#a9a9a9">Shader Graph</div>
<svg class="a" style="left:687px;top:891.5px" width="17" height="10"><g fill="none" stroke="#a8a8a8" stroke-width="1"><rect x="0.5" y="0.5" width="9" height="3.6" rx="1.5"/><rect x="5.2" y="5.8" width="11" height="3.6" rx="1.5"/></g><path d="M1.5 4V8H5" fill="none" stroke="#a8a8a8" stroke-width="1"/></svg>
<div class="t" style="left:708.5px;top:891px;font-size:11.5px;color:#a9a9a9">Timelines</div>
<svg class="a" style="left:785.5px;top:891px" width="10" height="11"><g stroke="#a8a8a8" stroke-width="1"><path d="M1.5 0.5V10.5M5 0.5V10.5M8.5 0.5V10.5"/></g><g fill="#a8a8a8"><rect x="0" y="6" width="3" height="1.8"/><rect x="3.5" y="2.5" width="3" height="1.8"/><rect x="7" y="5" width="3" height="1.8"/></g></svg>
<div class="t" style="left:799.5px;top:891px;font-size:11.5px;color:#a9a9a9">Audio Mixer</div>
<svg class="a" style="left:888px;top:891px" width="14" height="11"><g fill="none" stroke="#a8a8a8" stroke-width="1"><rect x="0.5" y="4.5" width="3" height="6" rx="1"/><rect x="5.5" y="2.5" width="3" height="8" rx="1"/><rect x="10.5" y="0.5" width="3" height="10" rx="1"/></g></svg>
<div class="t" style="left:906.5px;top:891px;font-size:11.5px;color:#a9a9a9">Statistics</div>
<svg class="a" style="left:1352.5px;top:890.5px" width="15" height="12"><rect x="0.6" y="0.6" width="13.6" height="10.6" rx="1.8" fill="none" stroke="#a8a8a8" stroke-width="1"/><rect x="10.8" y="2.2" width="1.8" height="7.4" fill="#a8a8a8"/></svg>
<svg class="a" style="left:1376.5px;top:890.5px" width="15" height="12"><rect x="0.6" y="0.6" width="13.6" height="10.6" rx="1.8" fill="none" stroke="#a8a8a8" stroke-width="1"/><rect x="2.2" y="7.4" width="10.4" height="2.2" fill="#a8a8a8"/></svg>

</body></html>
